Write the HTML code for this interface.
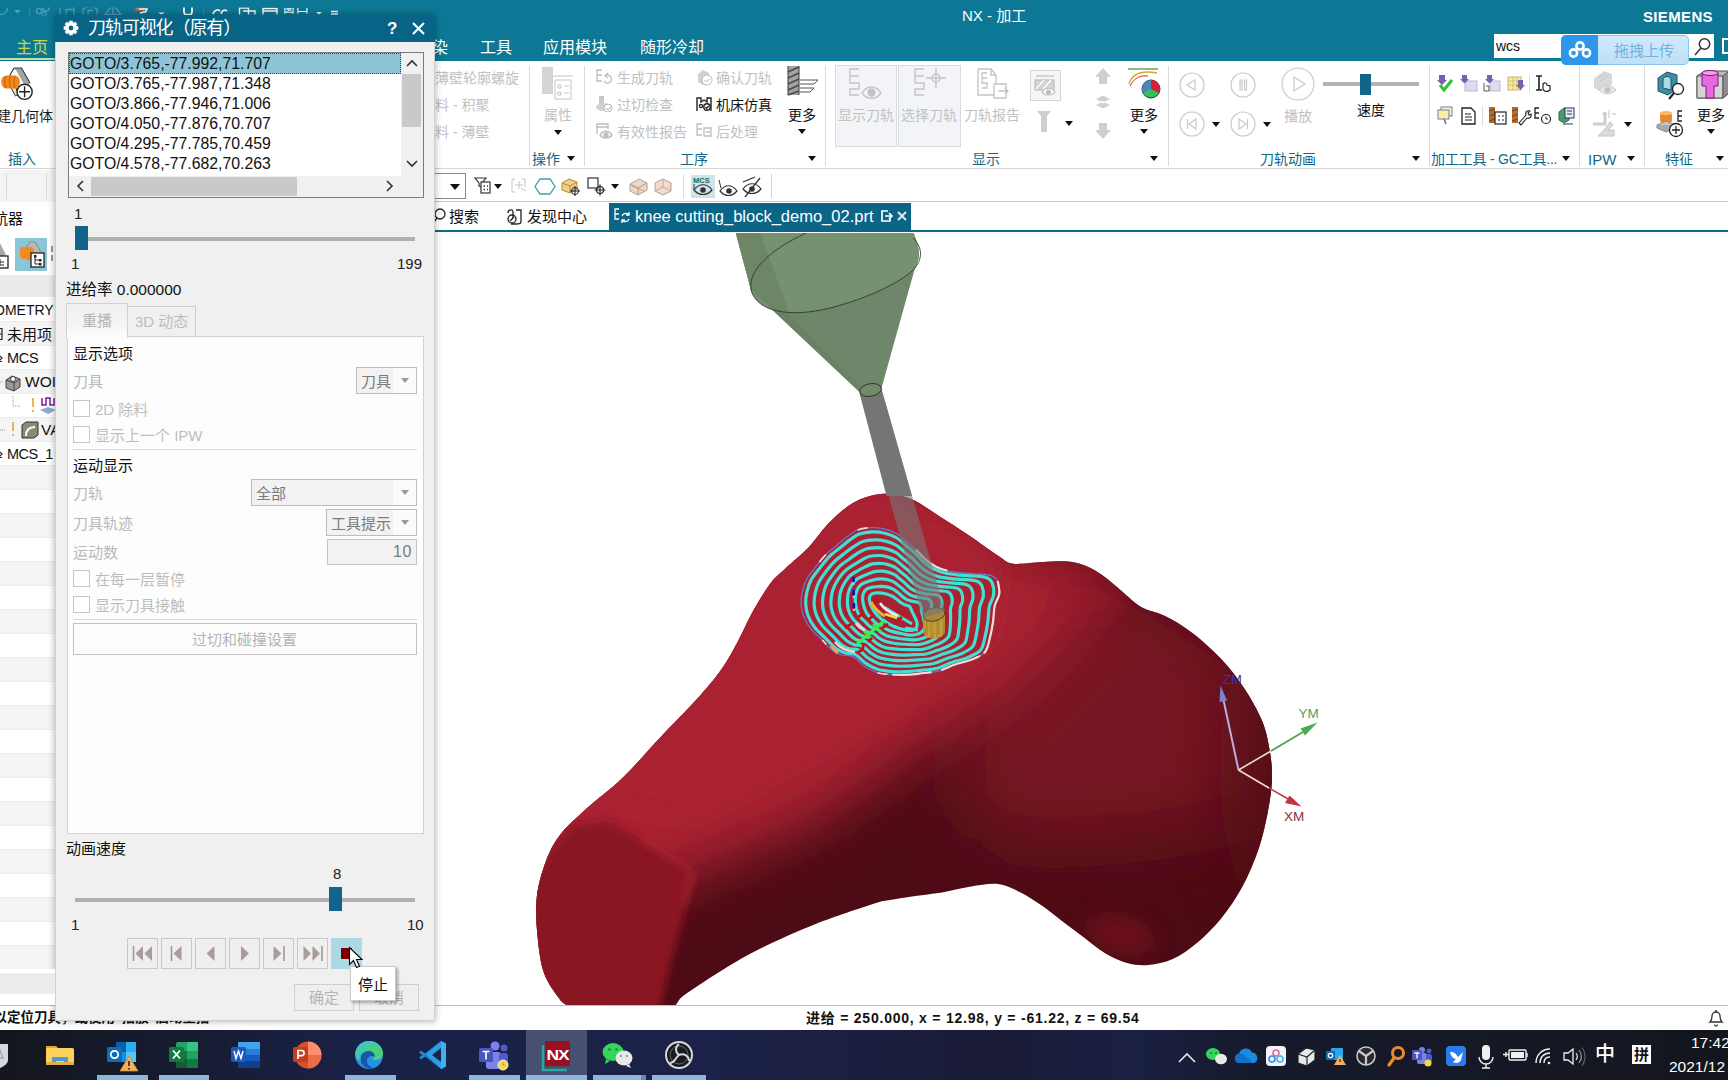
<!DOCTYPE html>
<html lang="zh-CN"><head><meta charset="utf-8"><title>NX - 加工</title>
<style>
*{box-sizing:border-box;margin:0;padding:0}
html,body{width:1728px;height:1080px;overflow:hidden;background:#fff}
body{position:relative;font-family:"Liberation Sans","Noto Sans CJK SC",sans-serif;font-size:14px;color:#1a1a1a}
.a{position:absolute;white-space:nowrap;line-height:1}
.teal{background:#0c7895}
.g{color:#c1c1c1}
.t{color:#0f6886}
.sep{position:absolute;width:1px;background:#d9d9d9}
.arr{position:absolute;width:0;height:0;border-left:4px solid transparent;border-right:4px solid transparent;border-top:5px solid #111}
.cb{position:absolute;width:17px;height:17px;border:1px solid #c6c6c6;background:#fff}
.pb{position:absolute;top:938px;width:31px;height:31px;border:1px solid #c9c9c9;background:#efefef}
.tk{position:absolute;top:1075px;height:5px;background:#8fb6d6}
</style></head><body>
<!-- ===== main window chrome ===== -->
<div id="titlebar" class="a teal" style="left:0;top:0;width:1728px;height:61px"></div>
<div id="ribbon" class="a" style="left:0;top:61px;width:1728px;height:108px;background:#fff;border-bottom:1px solid #d6d6d6"></div>
<div id="toolbar" class="a" style="left:0;top:170px;width:1728px;height:32px;background:#fff;border-bottom:1px solid #c8c8c8"></div>
<div id="tabrow" class="a" style="left:434px;top:203px;width:1294px;height:29px;background:#fff;border-bottom:2px solid #0f6886"></div>
<div id="viewport" class="a" style="left:434px;top:232px;width:1294px;height:773px;background:#fff"></div>
<div id="statusbar" class="a" style="left:0;top:1005px;width:1728px;height:26px;background:#fff;border-top:1px solid #bdbdbd"></div>
<div id="taskbar" class="a" style="left:0;top:1030px;width:1728px;height:50px;background:linear-gradient(90deg,#14161e 0,#161a2c 140px,#1a2146 345px,#1b2148 700px,#1a1c37 1000px,#1a2044 1130px,#171a2c 1250px,#14161e 1728px)"></div>

<!-- title bar content -->
<div class="a" style="left:962px;top:8px;font-size:15px;color:#fff">NX - 加工</div>
<div class="a" style="left:1643px;top:9px;font-size:15px;font-weight:bold;color:#fff;letter-spacing:.35px">SIEMENS</div>
<div class="a" style="left:16px;top:39.500px;font-size:16px;color:#c9d648">主页</div>
<div class="a" style="left:0;top:57.500px;width:55px;height:2.500px;background:#bfe2a0"></div>
<div class="a" style="left:432px;top:39.500px;font-size:16px;color:#fff">染</div>
<div class="a" style="left:480px;top:39.500px;font-size:16px;color:#fff">工具</div>
<div class="a" style="left:543px;top:39.500px;font-size:16px;color:#fff">应用模块</div>
<div class="a" style="left:640px;top:39.500px;font-size:16px;color:#fff">随形冷却</div>
<!-- quick access toolbar faint icons -->
<svg class="a" style="left:0;top:0" width="440" height="16" fill="none" stroke="#4f9db6" stroke-width="1.300">
<defs><clipPath id="qc"><rect x="0" y="7.500" width="440" height="8"/></clipPath></defs>
<g clip-path="url(#qc)">
<circle cx="1" cy="8" r="6.500"/><path d="M14 10l3.500 3.500L21 10z" fill="#4f9db6" stroke="none"/><path d="M29.500 0v16" stroke="#2c88a3"/>
<circle cx="46" cy="8" r="3"/><circle cx="39" cy="11" r="2.600"/><circle cx="44" cy="14" r="2"/><path d="M41 10l3-1"/>
<path d="M60 14.500V4h10l4 4v6.500M66 14.500v-5h8"/><path d="M83 14.500V9l7-3 7 3v5.500M88 14.500v-4h5"/><path d="M105 14.500l8-10 8 10zM113 7v7.500"/>
<path d="M134 10.500l3-3h10l-3 3z" fill="#e0643a" stroke="none"/><path d="M139 9h8l-1 2.500-6 1.500" stroke="#f4f4f4" stroke-width="1.500"/>
<path d="M158 12.500h7l-3.500 2z" fill="#e6f0f3" stroke="none"/>
<rect x="184" y="5" width="8" height="9.500" rx="2.500" stroke="#fff" stroke-width="1.700"/>
<path d="M203.500 0v16" stroke="#2c88a3"/>
<path d="M213 14c1-4 5-5 7-3M221 14c1-4 4-4.500 6-3" stroke="#e8f2f5" stroke-width="1.800"/>
<path d="M239.500 14.500V8h9v6.500M243 11h12v3.500" stroke="#f0f6f8" stroke-width="1.400"/><path d="M263 14.500V8.500h14v6M263 11h14" stroke="#f0f6f8" stroke-width="1.400"/>
<path d="M316 12h6l-3 2.500z" fill="#e6f0f3" stroke="none"/><path d="M331 11.500h7M331 14h7" stroke="#e6f0f3" stroke-width="1.300"/>
</g></svg>
<div class="a" style="left:282px;top:7.500px;height:7.500px;width:30px;overflow:hidden"><div style="position:absolute;left:0;top:-6.500px;font-size:13.500px;line-height:1;color:#f0f6f8">窗口</div></div>
<!-- search box -->
<div class="a" style="left:1494px;top:34px;width:220px;height:24px;background:#fff"></div>
<div class="a" style="left:1496px;top:39px;font-size:14px;color:#111">wcs</div>
<div class="a" style="left:1561px;top:35px;width:128px;height:30px;border-radius:5px;background:linear-gradient(#cfe9fb,#bfe0f7);border:1px solid #8cc3ee"></div>
<div class="a" style="left:1561px;top:35px;width:37px;height:30px;border-radius:5px 0 0 5px;background:#2f97ea"></div>
<svg class="a" style="left:1566px;top:39px" width="28" height="22" fill="none" stroke="#fff" stroke-width="2.6"><circle cx="14" cy="7" r="3.6"/><circle cx="7.5" cy="14" r="3.6"/><circle cx="20.500" cy="14" r="3.6"/></svg>
<div class="a" style="left:1614px;top:43px;font-size:15px;color:#6db4e6">拖拽上传</div>
<svg class="a" style="left:1692px;top:36px" width="22" height="22" fill="none" stroke="#333" stroke-width="1.5"><circle cx="12.5" cy="8" r="5.2"/><path d="M9 12l-6 7"/></svg>
<div class="a" style="left:1722px;top:38px;width:8px;height:16px;border:2px solid #fff;border-right:0"></div>
<!-- ribbon content -->
<svg class="a" style="left:0;top:64px" width="40" height="40"><path d="M14 4h7.500l8.500 15-3 5-3.500-4.500L16.500 7z" fill="#9ea4a8"/><path d="M14 4L9.500 12M14 4h7.500l8.500 15" fill="none" stroke="#3c3c3c" stroke-width="1.200"/><path d="M11 24l4.500 8 3-2-3-7z" fill="#e8d8d0" stroke="#3c3c3c" stroke-width="1"/><rect x="1.300" y="11.500" width="18.500" height="13" rx="5.500" fill="#f0861c"/><path d="M6 12c-1.500 4-1.500 8 0 12M10.500 12c-1.500 4-1.500 8 0 12M15 12c-1.500 4-1.500 8 0 12" stroke="#d06a08" stroke-width="1.300" fill="none"/><circle cx="24.600" cy="27.800" r="7.600" fill="#fff" stroke="#222" stroke-width="1.400"/><path d="M24.600 22.300v11M19.100 27.800h11" stroke="#222" stroke-width="1.400"/></svg>
<div class="a " style="left:-3px;top:109px;font-size:14px;">建几何体</div>
<div class="a t" style="left:8px;top:152px;font-size:14px;">插入</div>
<div class="a g" style="left:435px;top:71px;font-size:14px;">薄壁轮廓螺旋</div>
<div class="a g" style="left:435px;top:98px;font-size:14px;">料 - 积聚</div>
<div class="a g" style="left:435px;top:125px;font-size:14px;">料 - 薄壁</div>
<div class="sep" style="left:529px;top:66px;height:100px"></div>
<svg class="a" style="left:540px;top:66px" width="36" height="36" fill="none" stroke="#c4c4c4"><rect x="2" y="1" width="11" height="27" fill="#d4d4d4" stroke="none"/><path d="M13 10h20M15 14h16v19h-16z"/><path d="M18 19h3v3h-3zM18 26h3v3h-3zM24 20h5M24 27h5"/></svg>
<div class="a g" style="left:544px;top:108px;font-size:14px;">属性</div>
<div class="arr" style="left:554px;top:130px;border-top-color:#111"></div>
<div class="a t" style="left:532px;top:152px;font-size:14px;">操作</div>
<div class="arr" style="left:567px;top:156px;border-top-color:#111"></div>
<div class="sep" style="left:584px;top:66px;height:100px"></div>
<svg class="a" style="left:595px;top:68px" width="18" height="18" fill="none" stroke="#bdbdbd" stroke-width="1.3"><path d="M7 2H2v5h5M2 7v6h5"/><path d="M10 8a4 4 0 1 1-1 5M13 5l-3 3 3 2"/></svg>
<div class="a g" style="left:617px;top:71px;font-size:14px;">生成刀轨</div>
<svg class="a" style="left:595px;top:95px" width="18" height="18"><rect x="4" y="1" width="5" height="9" fill="#c9c9c9"/><ellipse cx="8" cy="12" rx="7" ry="4" fill="#d2d2d2"/><circle cx="13" cy="13" r="4" fill="#fff" stroke="#bbb"/><path d="M11 13l2 2 3-3" stroke="#aaa" fill="none"/></svg>
<div class="a g" style="left:617px;top:98px;font-size:14px;">过切检查</div>
<svg class="a" style="left:595px;top:122px" width="18" height="18" fill="none" stroke="#bdbdbd" stroke-width="1.3"><path d="M2 12V2h11v5M2 5h11"/><path d="M5 13c3-5 9-5 12 0-3 4-9 4-12 0z"/><circle cx="11" cy="13" r="2" fill="#bdbdbd"/></svg>
<div class="a g" style="left:617px;top:125px;font-size:14px;">有效性报告</div>
<svg class="a" style="left:695px;top:68px" width="18" height="18"><path d="M3 6l5-4 6 3v8l-6 4-5-3z" fill="#d0d0d0"/><circle cx="12" cy="12" r="5" fill="#fff" stroke="#bbb"/><path d="M9.500 12l2 2 3-3" stroke="#aaa" fill="none"/></svg>
<div class="a g" style="left:716px;top:71px;font-size:14px;">确认刀轨</div>
<svg class="a" style="left:695px;top:95px" width="18" height="18" fill="none" stroke="#222" stroke-width="1.4"><path d="M2 16V3h4v4l3-2 3 2V3h4v13"/><circle cx="6" cy="11" r="1.6"/><circle cx="12" cy="12" r="3.2" fill="#fff"/><path d="M10.500 12l1.200 1.300 2-2.300"/></svg>
<div class="a " style="left:716px;top:98px;font-size:14px;color:#111">机床仿真</div>
<svg class="a" style="left:695px;top:122px" width="18" height="18" fill="none" stroke="#bdbdbd" stroke-width="1.3"><path d="M7 2H2v5h5M2 7v6h5"/><path d="M9 6h7v8H9zM11 10h4"/></svg>
<div class="a g" style="left:716px;top:125px;font-size:14px;">后处理</div>
<svg class="a" style="left:786px;top:66px" width="36" height="34"><rect x="2" y="0" width="11" height="29" fill="#a2a2a2"/><path d="M2 6l11-5M2 12l11-5M2 18l11-5M2 24l11-5M2 29l11-4" stroke="#4a4a4a" stroke-width="1.6"/><path d="M2 0v29M13 0v29" stroke="#3a3a3a" stroke-width="1"/><path d="M14 14h18l-4 4H14M14 22h14l-4 4H14" fill="#fff" stroke="#555" stroke-width="1"/></svg>
<div class="a " style="left:788px;top:108px;font-size:14px;color:#111">更多</div>
<div class="arr" style="left:798px;top:129px;border-top-color:#111"></div>
<div class="a t" style="left:680px;top:152px;font-size:14px;">工序</div>
<div class="arr" style="left:808px;top:156px;border-top-color:#111"></div>
<div class="sep" style="left:825px;top:66px;height:100px"></div>
<div class="a" style="left:835px;top:65px;width:62px;height:82px;background:#f3f4f8;border:1px solid #d9dbe3"></div>
<div class="a" style="left:898px;top:65px;width:63px;height:82px;background:#f3f4f8;border:1px solid #d9dbe3"></div>
<svg class="a" style="left:848px;top:67px" width="40" height="34" fill="none" stroke="#c3c3c3" stroke-width="1.3"><path d="M11 2H2v7h9M2 9v7h9v6H2v6h9"/><path d="M14 26c5-8 14-8 19 0-5 7-14 7-19 0z"/><circle cx="23.500" cy="25.500" r="3.500" fill="#c3c3c3"/></svg>
<div class="a g" style="left:838px;top:108px;font-size:14px;">显示刀轨</div>
<svg class="a" style="left:911px;top:67px" width="40" height="34" fill="none" stroke="#c3c3c3" stroke-width="1.3"><path d="M13 2H4v7h9M4 9v7h9v6H4v6h9"/><circle cx="25" cy="11" r="4"/><path d="M25 1v20M15 11h20"/></svg>
<div class="a g" style="left:901px;top:108px;font-size:14px;">选择刀轨</div>
<svg class="a" style="left:974px;top:67px" width="40" height="36" fill="none" stroke="#c3c3c3" stroke-width="1.3"><path d="M4 2h13l5 6v20H4z"/><path d="M17 2v6h5M13 6H8v5h5M8 11v5h5v5H8"/><path d="M20 17h12v14H20zM24 24h10M31 21l3 3-3 3" fill="#fff"/></svg>
<div class="a g" style="left:964px;top:108px;font-size:14px;">刀轨报告</div>
<div class="a" style="left:1030px;top:70px;width:31px;height:31px;border:1px solid #d4d4d4;background:#f6f6f6"></div>
<svg class="a" style="left:1033px;top:72px" width="26" height="26" fill="none" stroke="#bdbdbd" stroke-width="1.2"><path d="M3 4h18"/><rect x="2" y="8" width="19" height="10" fill="#d4d4d4"/><path d="M3 17l8-9M10 17l8-9" stroke="#fff"/><path d="M9 20c3-5 10-5 13 0-3 4-10 4-13 0z" fill="#fff"/><circle cx="15.500" cy="20" r="2" fill="#bdbdbd"/></svg>
<svg class="a" style="left:1035px;top:109px" width="20" height="26"><path d="M2 2h14l-4 5v16H6V7z" fill="#cfcfcf"/></svg>
<div class="arr" style="left:1065px;top:121px;border-top-color:#111"></div>
<svg class="a" style="left:1094px;top:67px" width="20" height="74" fill="#cfcfcf"><path d="M9 1l8 9h-4v7H5v-7H1z"/><path d="M9 28l8 4-8 4-8-4zM9 34l8 4-8 4-8-4z" stroke="#fff"/><path d="M9 72l8-9h-4v-7H5v7H1z"/></svg>
<svg class="a" style="left:1126px;top:66px" width="36" height="36" fill="none"><path d="M2 3h30" stroke="#3a8a3a" stroke-width="1.2"/><path d="M3 18c3-10 12-14 28-11" stroke="#e0a030" stroke-width="1.3"/><path d="M4 20c4-8 10-11 18-10" stroke="#c03030" stroke-width="1"/><circle cx="25" cy="23" r="9" fill="#2ec45a" stroke="#333"/><path d="M25 23V14a9 9 0 0 1 8 13z" fill="#d8203a"/><path d="M25 23V14a9 9 0 0 0-8 13z" fill="#4a86b8"/></svg>
<div class="a " style="left:1130px;top:108px;font-size:14px;color:#111">更多</div>
<div class="arr" style="left:1140px;top:129px;border-top-color:#111"></div>
<div class="a t" style="left:972px;top:152px;font-size:14px;">显示</div>
<div class="arr" style="left:1150px;top:156px;border-top-color:#111"></div>
<div class="sep" style="left:1168px;top:66px;height:100px"></div>
<svg class="a" style="left:1179px;top:72px" width="26" height="26" fill="none" stroke="#c9c9c9" stroke-width="1.2"><circle cx="13" cy="13" r="12"/><path d="M16 8l-8 5 8 5z"/></svg>
<svg class="a" style="left:1230px;top:72px" width="26" height="26" fill="none" stroke="#c9c9c9" stroke-width="1.2"><circle cx="13" cy="13" r="12"/><path d="M10 8h2v10h-2zM14.500 8h2v10h-2z"/></svg>
<svg class="a" style="left:1179px;top:111px" width="26" height="26" fill="none" stroke="#c9c9c9" stroke-width="1.2"><circle cx="13" cy="13" r="12"/><path d="M17 8l-7 5 7 5zM8.500 8v10"/></svg>
<svg class="a" style="left:1230px;top:111px" width="26" height="26" fill="none" stroke="#c9c9c9" stroke-width="1.2"><circle cx="13" cy="13" r="12"/><path d="M9 8l7 5-7 5zM17.500 8v10"/></svg>
<div class="arr" style="left:1212px;top:122px;border-top-color:#111"></div>
<div class="arr" style="left:1263px;top:122px;border-top-color:#111"></div>
<svg class="a" style="left:1281px;top:67px" width="34" height="34" fill="none" stroke="#c9c9c9" stroke-width="1.2"><circle cx="17" cy="17" r="16"/><path d="M13 10l11 7-11 7z"/></svg>
<div class="a g" style="left:1284px;top:109px;font-size:14px;">播放</div>
<div class="a" style="left:1323px;top:82px;width:96px;height:4px;background:#b3b3b3"></div>
<div class="a" style="left:1360px;top:74px;width:11px;height:21px;background:#12648a"></div>
<div class="a " style="left:1357px;top:103px;font-size:14px;color:#111">速度</div>
<div class="a t" style="left:1260px;top:152px;font-size:14px;">刀轨动画</div>
<div class="arr" style="left:1412px;top:156px;border-top-color:#111"></div>
<div class="sep" style="left:1429px;top:66px;height:100px"></div>
<div class="a t" style="left:1431px;top:152px;font-size:14px;letter-spacing:-0.2px">加工工具 - GC工具...</div>
<div class="arr" style="left:1562px;top:156px;border-top-color:#111"></div>
<div class="sep" style="left:1579px;top:66px;height:100px"></div>
<div class="a t" style="left:1588px;top:151.5px;font-size:15px;">IPW</div>
<div class="arr" style="left:1627px;top:156px;border-top-color:#111"></div>
<div class="sep" style="left:1644px;top:66px;height:100px"></div>
<div class="a t" style="left:1665px;top:152px;font-size:14px;">特征</div>
<div class="arr" style="left:1716px;top:156px;border-top-color:#111"></div>
<div class="a " style="left:1697px;top:108px;font-size:14px;color:#111">更多</div>
<div class="arr" style="left:1707px;top:129px;border-top-color:#111"></div>
<div class="arr" style="left:1624px;top:122px"></div>
<!-- ribbon right icons -->
<svg class="a" style="left:1435px;top:72px" width="145" height="56" fill="none">
<!-- row1 -->
<path d="M4 3h6v5h2l-5 5-5-5h2z" fill="#7a5fb0"/><path d="M5 13l4 5 8-10" stroke="#35c035" stroke-width="3"/>
<rect x="30" y="9" width="12" height="10" fill="#dcdcf0" stroke="#b8b8d8"/><path d="M27 3h5v4h2l-4.500 4.500L25 7h2z" fill="#7a5fb0"/>
<rect x="55" y="9" width="10" height="10" fill="#dcdcf0" stroke="#b8b8d8"/><path d="M52 3h5v4h2l-4.500 4.500L50 7h2z" fill="#7a5fb0"/><path d="M49 11v8h5v-5h-3" stroke="#555"/>
<rect x="73" y="5" width="13" height="13" fill="#f6e9a8" stroke="#c8b868"/><path d="M73 9h13M73 13h13M78 5v13M82 5v13" stroke="#c8b868" stroke-width=".7"/><path d="M83 8h5v5h2l-4.500 5-4.500-5h2z" fill="#7a5fb0"/>
<path d="M94.500 3v18" stroke="#ddd"/>
<path d="M101 4h6M104 4v14M101 18h6" stroke="#222" stroke-width="1.600"/><path d="M108 12c2-2 4-1 4 1l3 1v4c-2 2-6 2-7-1z" fill="#fff" stroke="#222" stroke-width="1.200"/>
<!-- row2 -->
<rect x="6" y="35" width="11" height="9" fill="#f3f3d8" stroke="#7a7aa0"/><rect x="3" y="38" width="11" height="9" fill="#f6f0a0" stroke="#7a7aa0"/><path d="M9 47l2 5" stroke="#7a5fb0" stroke-width="1.500"/>
<path d="M27 36h9l4 4v12H27z" stroke="#222" stroke-width="1.300"/><path d="M30 42h6M30 45h7M30 48h7" stroke="#222" stroke-width="1"/>
<path d="M47.500 34v20" stroke="#ddd"/>
<rect x="54" y="35" width="6" height="16" fill="#b86a2a"/><path d="M54 39l6-2M54 44l6-2M54 49l6-2" stroke="#7a4010"/><rect x="60" y="40" width="11" height="12" fill="#fff" stroke="#222" stroke-width="1.200"/><path d="M63 44h2M63 48h2M67 44h2M67 48h2" stroke="#222"/>
<rect x="77" y="35" width="6" height="16" fill="#b86a2a"/><path d="M77 39l6-2M77 44l6-2M77 49l6-2" stroke="#7a4010"/><path d="M84 51l7-8c-1-3 1-5 4-4l-2 2 1 2 2-1c1 3-2 5-4 4l-6 7z" fill="#fff" stroke="#222" stroke-width="1.100"/>
<path d="M104 36h-4v5h4M100 41v5h4" stroke="#222" stroke-width="1.300"/><circle cx="111" cy="47" r="4.500" stroke="#222" stroke-width="1.200"/><path d="M111 44.500V47h2" stroke="#222"/>
<path d="M124 40l5-4 5 2v10l-5 3-5-3z" fill="#4a9a6a" stroke="#2a6a4a"/><rect x="130" y="36" width="9" height="10" fill="#e8eef8" stroke="#335"/><path d="M132 39h5M132 42h5" stroke="#335"/><path d="M128 52h10" stroke="#335"/>
</svg>
<svg class="a" style="left:1590px;top:68px" width="30" height="72" fill="none">
<path d="M4 10l10-7 8 3v10l-10 8-8-4z" fill="#d9d9d9"/><path d="M8 10l8-5M10 13l8-5" stroke="#c4c4c4"/><path d="M9 22c4-6 12-6 17 0-5 5-13 5-17 0z" fill="#e6e6e6" stroke="#c9c9c9"/><circle cx="17.500" cy="22" r="3" fill="#c2c2c2"/>
<path d="M3 56h12V44" stroke="#cfcfcf" stroke-width="3"/><path d="M12 46h4M22 46h4M19 42v8" stroke="#c4c4c4"/><path d="M8 68l8-8 4-6 3 3-5 5h6v6z" fill="#dcdcdc" stroke="#c4c4c4"/>
</svg>
<svg class="a" style="left:1655px;top:68px" width="74" height="72" fill="none">
<path d="M3 10l9-6 10 3v14l-9 6-10-4z" fill="#3c8ea0" stroke="#1e5566"/><path d="M8 12c0-4 8-5 8 0v10l-8-2z" fill="#a8dce6" stroke="#1e5566"/><circle cx="23" cy="21" r="5.500" fill="#fff" stroke="#222" stroke-width="1.300"/><path d="M19 25l-5 6" stroke="#222" stroke-width="2"/>
<path d="M42 8l8-5h20l4 0v22l-6 5H42z" fill="#b9b9b9" stroke="#555"/><path d="M42 8h26v22H42z" fill="#d4d4d4" stroke="#555"/><path d="M68 8l6-5v22l-6 5z" fill="#8e8e8e" stroke="#555"/><path d="M47 5h16v13h-4v12h-8V18h-4z" fill="#e868e0" stroke="#7a1a7a"/><ellipse cx="55" cy="5" rx="8" ry="2.500" fill="#f0a0ea" stroke="#7a1a7a"/>
<rect x="5" y="45" width="12" height="10" rx="3" fill="#f08a28"/><ellipse cx="11" cy="45" rx="6" ry="2" fill="#f8b868"/><path d="M2 57l9-4 9 4-9 4z" fill="#c8c8c8" stroke="#888"/><path d="M2 57v3l9 4 9-4v-3" fill="#aaa" stroke="#888"/><path d="M27 43h-4v5h4M23 48v5h4" stroke="#222" stroke-width="1.300"/><circle cx="21" cy="62" r="6.500" fill="#fff" stroke="#222" stroke-width="1.300"/><path d="M21 58v8M17 62h8" stroke="#222" stroke-width="1.300"/>
</svg>
<!-- toolbar row -->
<div class="a" style="left:434px;top:173px;width:32px;height:26px;border:1px solid #8a8a8a;border-left:0;background:#fff"></div>
<div class="arr" style="left:450px;top:184px;border-left-width:5px;border-right-width:5px;border-top-width:6px"></div>
<svg class="a" style="left:472px;top:172px" width="310" height="28" fill="none">
<path d="M3 6h11l-4 5v4l-3-1v-3z" stroke="#333" stroke-width="1.200"/><rect x="9" y="10" width="9" height="11" fill="#fff" stroke="#333" stroke-width="1.200"/><path d="M11.500 14h1.500M11.500 17.500h1.500M15 14h1M15 17.500h1" stroke="#333" stroke-width="1.300"/>
<path d="M22 12h8l-4 5z" fill="#111"/>
<path d="M43 7h-3v13h3M50 7h3v8" stroke="#c4c4c4"/><path d="M43 13h8M47 9v8M49 16l5 3" stroke="#c4c4c4"/>
<path d="M68 7h10l5 7.500-5 7.500H68l-5-7.500z" stroke="#3aa0a8" stroke-width="1.300"/>
<path d="M90 11l7-4 8 3v7l-7 4-8-3z" fill="#f2cf88" stroke="#b88a30"/><path d="M90 11l8 3 7-4M98 14v7" stroke="#b88a30"/><circle cx="103" cy="19" r="3.500" stroke="#222"/><path d="M103 14v10M98 19h10" stroke="#222"/>
<rect x="116" y="6" width="10" height="10" stroke="#333" stroke-width="1.200"/><circle cx="128" cy="18" r="3.500" stroke="#222" stroke-width="1.200"/><path d="M128 12.500v11M122.500 18h11" stroke="#222" stroke-width="1.200"/>
<path d="M139 12h8l-4 5z" fill="#111"/>
<path d="M158 12l9-5 8 4v7l-9 5-8-4z" fill="#ecd8c8" stroke="#b0a090"/><path d="M158 12l8 4 9-5M166 16v7" stroke="#b0a090"/><path d="M160 14l12 5" stroke="#c8a078"/>
<path d="M183 11l8-4 8 4v8l-8 4-8-4z" fill="#f0dcd0" stroke="#b0a090"/><path d="M191 7v8l-8 4M191 15l8 4" stroke="#c8a890"/>
<path d="M211.500 2v24" stroke="#ddd"/>
<rect x="219" y="3" width="24" height="23" fill="#cfe4e6"/><text x="221" y="11" font-family="Liberation Sans,sans-serif" font-size="7.500" font-weight="bold" fill="#1a6a50">MCS</text><path d="M222 18c5-7 13-7 18 0-5 6-13 6-18 0z" stroke="#333" stroke-width="1.200"/><circle cx="231" cy="18" r="2.800" fill="#333"/><path d="M222 12v6" stroke="#333"/>
<path d="M248 19c5-7 12-7 17 0-5 6-12 6-17 0z" stroke="#333" stroke-width="1.200"/><circle cx="257" cy="19" r="2.800" fill="#333"/><path d="M247 8l2 8" stroke="#333"/>
<path d="M271 17c5-7 13-7 18 0-5 6-13 6-18 0z" stroke="#333" stroke-width="1.200"/><circle cx="280" cy="17" r="2.800" fill="#333"/><path d="M273 25l15-19M271 10l12-5" stroke="#333" stroke-width="1.300"/>
<path d="M299.500 2v24" stroke="#e8c8c8"/>
</svg>
<div class="a" style="left:0;top:170px;width:55px;height:32px;background:#f4f4f4"></div><div class="sep" style="left:6px;top:173px;height:26px"></div><div class="sep" style="left:46px;top:173px;height:26px"></div>
<!-- tab row -->
<svg class="a" style="left:434px;top:206px" width="16" height="20" fill="none" stroke="#222" stroke-width="1.300"><circle cx="6" cy="8" r="5"/><path d="M3 12l-3 4"/></svg>
<div class="a" style="left:449px;top:209px;font-size:15px;color:#111">搜索</div>
<svg class="a" style="left:506px;top:206px" width="18" height="20" fill="none" stroke="#222" stroke-width="1.300"><path d="M2 7c0-4 5-4 5-1v6M10 4h5v12c0 2-2 2-5 2H5"/><circle cx="6" cy="13" r="4"/><path d="M4 15l4-4"/></svg>
<div class="a" style="left:527px;top:209px;font-size:15px;color:#111">发现中心</div>
<div class="a" style="left:609px;top:203px;width:302px;height:29px;background:#0a6587"></div>
<svg class="a" style="left:613px;top:207px" width="18" height="20" fill="none" stroke="#fff" stroke-width="1.300"><path d="M6 2H2v5h4M2 7v5h4"/><path d="M9 9a4 4 0 0 1 7-1M16 12a4 4 0 0 1-7 1M16 5v3h-3M9 16v-3h3"/></svg>
<div class="a" id="tabtxt" style="left:635px;top:208px;font-size:16.500px;color:#fff">knee cutting_block_demo_02.prt</div>
<svg class="a" style="left:880px;top:209px" width="30" height="14" fill="none" stroke="#fff" stroke-width="1.700"><path d="M8 2H2v10h8V8M5 7h6M9 4l3 3-3 3"/><path d="M18 3l8 8M26 3l-8 8" stroke="#dfeaf0" stroke-width="2"/></svg>
<!--VIEW-->
<svg id="view" class="a" style="left:434px;top:233px" width="1294" height="772" viewBox="434 233 1294 772">
<defs>
<clipPath id="bc"><path d="M881.0 494.0C890.5 493.2 900.3 494.8 910.0 498.5C919.7 502.2 929.2 509.8 939.0 516.0C948.8 522.2 959.1 528.8 969.0 535.5C978.9 542.2 991.2 551.3 998.5 556.0C1005.8 560.7 1005.6 562.7 1013.0 563.7C1020.4 564.7 1033.1 562.3 1043.0 562.0C1052.9 561.7 1063.8 560.5 1072.6 562.0C1081.4 563.5 1088.6 566.8 1096.0 571.0C1103.4 575.2 1109.5 581.0 1117.0 587.0C1124.5 593.0 1132.9 602.0 1140.7 606.7C1148.5 611.5 1155.6 611.3 1164.0 615.5C1172.4 619.7 1181.5 624.8 1191.0 632.0C1200.5 639.2 1211.9 649.2 1220.7 658.5C1229.5 667.8 1237.1 677.6 1244.0 688.0C1250.9 698.4 1257.7 710.4 1262.0 720.7C1266.3 731.0 1267.9 740.3 1269.6 750.0C1271.3 759.7 1272.3 768.8 1272.0 779.0C1271.7 789.2 1270.2 799.3 1268.0 811.0C1265.8 822.7 1262.8 836.4 1258.6 849.0C1254.3 861.6 1248.8 874.9 1242.5 886.5C1236.2 898.1 1228.6 909.3 1221.0 918.7C1213.4 928.1 1205.0 936.2 1196.9 942.9C1188.9 949.6 1180.8 955.3 1172.7 959.0C1164.6 962.7 1156.1 964.3 1148.5 965.0C1140.9 965.7 1134.2 964.9 1127.0 963.0C1119.8 961.1 1112.8 957.9 1105.6 953.6C1098.4 949.4 1091.2 942.9 1084.0 937.5C1076.8 932.1 1069.8 926.8 1062.6 921.4C1055.4 916.0 1048.2 909.9 1041.0 905.0C1033.8 900.1 1026.8 895.4 1019.6 891.9C1012.4 888.4 1006.1 884.9 998.0 884.0C989.9 883.1 979.9 885.2 971.0 886.5C962.1 887.8 954.2 890.3 944.4 892.0C934.6 893.7 921.1 895.2 912.0 896.5C902.9 897.8 896.5 898.8 890.0 900.0C883.5 901.2 885.4 900.0 873.0 904.0C860.6 908.0 834.9 916.4 815.7 924.0C796.5 931.6 774.3 941.6 758.0 949.7C741.7 957.8 730.4 965.1 718.0 972.7C705.6 980.4 691.4 989.9 683.7 995.6C676.0 1001.3 679.3 1004.3 672.0 1007.0C664.7 1009.7 652.0 1011.2 640.0 1012.0C628.0 1012.8 611.8 1013.0 600.0 1012.0C588.2 1011.0 576.2 1008.7 569.0 1006.0C561.8 1003.3 561.3 1001.6 557.0 995.6C552.7 989.6 546.3 980.9 543.0 970.0C539.7 959.1 538.0 942.5 537.0 930.0C536.0 917.5 535.5 906.5 537.0 895.0C538.5 883.5 542.2 871.0 546.0 861.0C549.8 851.0 553.3 843.7 560.0 835.0C566.7 826.3 575.5 818.6 586.0 809.0C596.5 799.4 610.5 789.5 623.0 777.5C635.5 765.5 648.4 750.1 660.7 737.0C673.0 723.9 687.0 710.2 697.0 699.0C707.0 687.8 714.2 679.5 721.0 670.0C727.8 660.5 732.5 651.3 737.6 642.0C742.7 632.7 746.1 623.7 751.5 614.0C756.9 604.3 764.2 591.7 770.0 584.0C775.8 576.3 779.5 574.2 786.0 568.0C792.5 561.8 802.0 554.3 809.0 547.0C816.0 539.7 820.7 531.3 828.0 524.0C835.3 516.7 844.2 508.0 853.0 503.0C861.8 498.0 871.5 494.8 881.0 494.0Z"/></clipPath>
<filter id="b30" filterUnits="userSpaceOnUse" x="400" y="300" width="1000" height="800"><feGaussianBlur stdDeviation="28"/></filter>
<filter id="b40" filterUnits="userSpaceOnUse" x="400" y="300" width="1000" height="800"><feGaussianBlur stdDeviation="38"/></filter>
<filter id="b12" filterUnits="userSpaceOnUse" x="400" y="300" width="1000" height="800"><feGaussianBlur stdDeviation="12"/></filter>
<filter id="b4" filterUnits="userSpaceOnUse" x="400" y="300" width="1000" height="800"><feGaussianBlur stdDeviation="4"/></filter>
<linearGradient id="sh" x1="0" y1="0" x2="1" y2="0"><stop offset="0" stop-color="#6e6e6e"/><stop offset=".5" stop-color="#8a8a8a"/><stop offset="1" stop-color="#707070"/></linearGradient>
</defs>
<g clip-path="url(#bc)">
<rect x="500" y="480" width="800" height="540" fill="#4d0b15"/>
<path d="M1000.0 540.0L1120.0 570.0L1290.0 680.0L1290.0 800.0L1200.0 830.0L1110.0 840.0L1030.0 845.0L985.0 835.0L955.0 790.0L965.0 700.0Z" fill="#771520" filter="url(#b40)"/>
<ellipse cx="1275" cy="770" rx="55" ry="150" fill="#560c16" filter="url(#b30)" opacity=".75"/>
<path d="M881.0 470.0L960.0 500.0L1020.0 556.0L1090.0 556.0L1104.0 590.0L1068.0 632.0L1011.0 691.0L912.0 755.0L814.0 824.0L692.0 876.0L640.0 900.0L560.0 1000.0L500.0 1000.0L500.0 800.0L700.0 620.0L800.0 480.0Z" fill="#aa2233" filter="url(#b30)"/>
<path d="M881.0 485.0L950.0 515.0L1000.0 560.0L990.0 640.0L900.0 705.0L780.0 770.0L690.0 820.0L610.0 800.0L540.0 850.0L520.0 800.0L700.0 650.0L800.0 500.0Z" fill="#aa2233" filter="url(#b12)"/>
<path d="M609.0 821.0L640.0 838.0L695.0 872.0L684.0 915.0L672.0 958.0L660.0 1010.0L560.0 1010.0L530.0 960.0L530.0 890.0L546.0 855.0L570.0 826.0Z" fill="#8a1624" filter="url(#b4)"/>
<path d="M640 838 C660 850 675 858 693 872 L684 905" stroke="#c8384a" stroke-width="3" fill="none" filter="url(#b4)" opacity=".7"/>
<ellipse cx="1085" cy="600" rx="40" ry="22" fill="#98192b" filter="url(#b12)" opacity=".45"/>
<ellipse cx="1120" cy="935" rx="35" ry="14" fill="#7c1422" filter="url(#b12)" opacity=".9" transform="rotate(15 1120 935)"/>
</g>
<g fill="none" stroke-linejoin="round">
<path d="M857.7 530.0C861.9 528.4 867.3 527.8 871.8 527.6C876.2 527.4 880.2 528.0 884.4 529.0C888.6 530.0 893.3 531.8 897.0 533.9C900.7 536.0 903.4 539.2 906.5 541.8C909.6 544.4 912.5 546.5 915.9 549.6C919.3 552.7 923.5 557.7 926.9 560.6C930.3 563.5 933.0 565.2 936.4 566.9C939.8 568.6 943.0 569.9 947.4 570.9C951.8 571.9 957.8 572.5 963.0 573.0C968.2 573.5 974.2 573.6 978.9 574.0C983.6 574.4 988.3 574.4 991.4 575.6C994.5 576.8 996.4 578.0 997.7 581.0C999.0 584.0 999.8 589.5 999.3 593.7C998.8 597.9 995.6 601.6 994.6 606.3C993.6 611.0 993.8 616.8 993.0 622.0C992.2 627.2 991.2 632.8 989.9 637.8C988.6 642.8 988.1 648.3 985.0 652.0C981.9 655.7 976.0 657.7 971.0 659.8C966.0 661.9 960.2 662.7 955.0 664.5C949.8 666.3 944.7 669.4 939.5 670.8C934.3 672.2 929.0 672.4 923.8 673.0C918.5 673.6 913.2 674.4 908.0 674.7C902.8 675.0 897.5 675.1 892.3 674.7C887.1 674.3 881.3 673.9 876.6 672.4C871.9 670.9 867.9 668.6 864.0 666.0C860.1 663.4 856.7 658.4 853.0 656.6C849.3 654.8 845.4 656.0 842.0 655.0C838.6 654.0 835.9 652.9 832.5 650.3C829.1 647.7 825.2 643.0 821.5 639.3C817.8 635.6 813.5 632.2 810.5 628.3C807.5 624.4 805.0 619.9 803.4 615.7C801.8 611.5 801.1 607.2 801.0 603.0C800.9 598.8 801.6 594.7 802.6 590.5C803.6 586.3 804.9 582.2 807.3 578.0C809.7 573.8 813.6 569.4 816.8 565.4C819.9 561.4 822.8 557.7 826.2 554.3C829.6 550.9 833.8 547.8 837.2 544.9C840.6 542.0 843.3 539.5 846.7 537.0C850.1 534.5 853.5 531.6 857.7 530.0Z" stroke="#6a74c8" stroke-width="1.300"/>
<path d="M857.7 530.0C861.9 528.4 867.3 527.8 871.8 527.6C876.2 527.4 880.2 528.0 884.4 529.0C888.6 530.0 893.3 531.8 897.0 533.9C900.7 536.0 903.4 539.2 906.5 541.8C909.6 544.4 912.5 546.5 915.9 549.6C919.3 552.7 923.5 557.7 926.9 560.6C930.3 563.5 933.0 565.2 936.4 566.9C939.8 568.6 943.0 569.9 947.4 570.9C951.8 571.9 957.8 572.5 963.0 573.0C968.2 573.5 974.2 573.6 978.9 574.0C983.6 574.4 988.3 574.4 991.4 575.6C994.5 576.8 996.4 578.0 997.7 581.0C999.0 584.0 999.8 589.5 999.3 593.7C998.8 597.9 995.6 601.6 994.6 606.3C993.6 611.0 993.8 616.8 993.0 622.0C992.2 627.2 991.2 632.8 989.9 637.8C988.6 642.8 988.1 648.3 985.0 652.0C981.9 655.7 976.0 657.7 971.0 659.8C966.0 661.9 960.2 662.7 955.0 664.5C949.8 666.3 944.7 669.4 939.5 670.8C934.3 672.2 929.0 672.4 923.8 673.0C918.5 673.6 913.2 674.4 908.0 674.7C902.8 675.0 897.5 675.1 892.3 674.7C887.1 674.3 881.3 673.9 876.6 672.4C871.9 670.9 867.9 668.6 864.0 666.0C860.1 663.4 856.7 658.4 853.0 656.6C849.3 654.8 845.4 656.0 842.0 655.0C838.6 654.0 835.9 652.9 832.5 650.3C829.1 647.7 825.2 643.0 821.5 639.3C817.8 635.6 813.5 632.2 810.5 628.3C807.5 624.4 805.0 619.9 803.4 615.7C801.8 611.5 801.1 607.2 801.0 603.0C800.9 598.8 801.6 594.7 802.6 590.5C803.6 586.3 804.9 582.2 807.3 578.0C809.7 573.8 813.6 569.4 816.8 565.4C819.9 561.4 822.8 557.7 826.2 554.3C829.6 550.9 833.8 547.8 837.2 544.9C840.6 542.0 843.3 539.5 846.7 537.0C850.1 534.5 853.5 531.6 857.7 530.0Z" stroke="#f0dede" stroke-width="1.600" stroke-dasharray="10 60 6 90"/>
<path d="M997.7 581.0C998.0 583.1 999.8 589.5 999.3 593.7C998.8 597.9 995.6 601.6 994.6 606.3C993.6 611.0 993.8 616.8 993.0 622.0C992.2 627.2 991.2 632.8 989.9 637.8C988.6 642.8 988.1 648.3 985.0 652.0C981.9 655.7 976.0 657.7 971.0 659.8C966.0 661.9 960.2 662.7 955.0 664.5C949.8 666.3 944.7 669.4 939.5 670.8C934.3 672.2 929.0 672.4 923.8 673.0C918.5 673.6 913.2 674.4 908.0 674.7C902.8 675.0 894.9 674.7 892.3 674.7" stroke="#efdcdc" stroke-width="2.200" stroke-dasharray="75 6 40 10 60 400"/>
<path d="M915.9 549.6C917.7 551.4 923.5 557.7 926.9 560.6C930.3 563.5 933.0 565.2 936.4 566.9C939.8 568.6 945.6 570.2 947.4 570.9" stroke="#efdcdc" stroke-width="2.200"/>
<path d="M859.5 534.1C863.5 532.7 868.7 532.1 872.9 531.9C877.1 531.8 880.9 532.3 884.8 533.3C888.8 534.3 893.3 535.9 896.8 538.0C900.3 540.0 902.8 543.0 905.8 545.4C908.8 547.9 911.5 549.9 914.7 552.8C917.9 555.8 921.9 560.5 925.2 563.2C928.4 566.0 930.9 567.6 934.2 569.2C937.4 570.9 940.4 572.1 944.6 573.0C948.8 574.0 954.4 574.6 959.3 575.1C964.3 575.6 969.8 575.6 974.3 576.0C978.8 576.4 983.1 576.5 986.1 577.6C989.1 578.7 990.8 579.8 992.1 582.7C993.3 585.5 994.1 590.7 993.6 594.7C993.2 598.7 990.2 602.1 989.3 606.6C988.3 611.1 988.6 616.5 987.9 621.5C987.2 626.5 986.3 631.8 985.1 636.5C983.9 641.3 983.5 646.6 980.6 650.1C977.7 653.6 972.2 655.6 967.5 657.7C962.8 659.7 957.4 660.5 952.4 662.3C947.3 664.0 942.4 666.9 937.4 668.2C932.4 669.5 927.4 669.6 922.4 670.2C917.3 670.7 912.3 671.4 907.3 671.7C902.3 671.9 897.3 672.0 892.3 671.6C887.4 671.2 881.9 670.7 877.4 669.3C873.0 667.9 869.2 665.7 865.5 663.2C861.8 660.7 858.5 656.1 855.0 654.3C851.6 652.6 847.9 653.8 844.6 652.8C841.4 651.8 838.9 650.8 835.7 648.3C832.4 645.8 828.7 641.4 825.2 637.9C821.7 634.4 817.7 631.2 814.8 627.5C811.9 623.7 809.5 619.5 808.0 615.5C806.5 611.5 805.8 607.4 805.7 603.5C805.5 599.5 806.1 595.5 807.0 591.6C808.0 587.6 809.1 583.6 811.3 579.6C813.5 575.6 817.2 571.3 820.2 567.5C823.1 563.7 825.9 560.1 829.1 556.8C832.4 553.6 836.5 550.7 839.8 548.0C843.1 545.3 845.6 542.9 848.9 540.6C852.2 538.3 855.5 535.6 859.5 534.1ZM862.7 541.6C866.3 540.3 871.0 539.9 874.9 539.8C878.7 539.7 882.1 540.2 885.7 541.1C889.2 542.0 893.3 543.5 896.4 545.4C899.6 547.2 901.8 549.8 904.5 552.1C907.2 554.3 909.7 556.0 912.6 558.7C915.5 561.4 919.1 565.6 922.0 568.1C924.9 570.5 927.2 572.0 930.1 573.4C933.0 574.9 935.7 576.0 939.4 576.9C943.2 577.8 948.2 578.3 952.6 578.8C957.0 579.3 962.0 579.3 966.0 579.7C969.9 580.1 973.8 580.1 976.5 581.1C979.1 582.1 980.7 583.2 981.8 585.7C982.9 588.3 983.7 592.9 983.3 596.5C982.9 600.0 980.4 603.1 979.6 607.1C978.8 611.2 979.1 616.0 978.6 620.6C978.0 625.1 977.3 629.8 976.4 634.2C975.4 638.5 975.2 643.4 972.6 646.6C970.1 649.9 965.4 651.8 961.2 653.8C957.0 655.7 952.1 656.6 947.6 658.2C943.0 659.8 938.3 662.3 933.7 663.5C929.1 664.6 924.4 664.6 919.8 665.0C915.1 665.5 910.5 666.0 905.9 666.1C901.4 666.3 896.9 666.3 892.4 665.9C887.9 665.4 883.0 665.0 879.0 663.7C874.9 662.4 871.6 660.4 868.2 658.2C864.8 655.9 861.9 651.7 858.8 650.2C855.7 648.6 852.4 649.6 849.5 648.7C846.6 647.8 844.3 646.9 841.4 644.7C838.5 642.4 835.1 638.4 832.0 635.3C828.8 632.2 825.2 629.3 822.6 625.9C820.0 622.6 817.8 618.8 816.4 615.2C815.0 611.6 814.3 607.9 814.1 604.3C813.9 600.7 814.4 597.1 815.1 593.5C815.9 589.9 816.8 586.2 818.7 582.5C820.5 578.8 823.7 574.7 826.3 571.2C829.0 567.7 831.5 564.4 834.5 561.5C837.5 558.5 841.3 556.0 844.4 553.6C847.5 551.2 849.9 549.2 853.0 547.2C856.0 545.2 859.0 542.8 862.7 541.6ZM865.9 549.0C869.2 548.0 873.4 547.7 876.8 547.6C880.3 547.6 883.3 548.1 886.5 548.9C889.7 549.8 893.2 551.1 896.0 552.7C898.8 554.4 900.9 556.7 903.3 558.7C905.6 560.7 907.8 562.2 910.4 564.6C913.0 566.9 916.2 570.7 918.8 572.9C921.4 575.0 923.5 576.4 926.0 577.7C928.6 579.0 931.0 580.0 934.3 580.8C937.6 581.6 942.0 582.1 945.9 582.5C949.8 583.0 954.1 583.1 957.6 583.4C961.1 583.8 964.5 583.8 966.8 584.7C969.1 585.6 970.5 586.5 971.5 588.7C972.6 591.0 973.3 595.1 973.0 598.2C972.7 601.4 970.5 604.1 969.9 607.7C969.3 611.3 969.6 615.6 969.2 619.6C968.9 623.7 968.4 627.9 967.6 631.9C966.9 635.8 966.8 640.2 964.7 643.2C962.5 646.2 958.5 648.1 954.8 649.9C951.2 651.7 946.9 652.7 942.8 654.1C938.6 655.6 934.2 657.8 930.0 658.8C925.7 659.7 921.4 659.6 917.2 659.9C913.0 660.2 908.7 660.5 904.6 660.6C900.5 660.6 896.5 660.6 892.5 660.1C888.4 659.7 884.1 659.3 880.5 658.1C876.9 656.9 873.9 655.2 870.9 653.1C867.9 651.1 865.3 647.4 862.5 646.0C859.7 644.6 856.8 645.5 854.3 644.7C851.7 643.8 849.7 643.0 847.1 641.0C844.5 639.1 841.5 635.5 838.7 632.7C835.9 629.9 832.7 627.4 830.4 624.4C828.0 621.4 826.1 618.0 824.8 614.8C823.5 611.6 822.8 608.3 822.6 605.1C822.3 601.9 822.6 598.7 823.2 595.4C823.8 592.1 824.5 588.8 826.0 585.4C827.6 582.0 830.2 578.2 832.5 575.0C834.8 571.8 837.1 568.7 839.8 566.1C842.6 563.4 846.2 561.2 849.1 559.2C851.9 557.1 854.2 555.4 857.0 553.7C859.8 552.0 862.6 550.0 865.9 549.0ZM869.1 556.5C872.1 555.7 875.8 555.5 878.8 555.5C881.8 555.5 884.5 556.0 887.3 556.7C890.1 557.5 893.2 558.7 895.7 560.1C898.1 561.6 899.9 563.6 902.0 565.3C904.1 567.0 906.0 568.4 908.3 570.4C910.5 572.5 913.4 575.8 915.6 577.7C917.9 579.6 919.7 580.7 922.0 581.9C924.2 583.1 926.3 584.0 929.2 584.7C932.0 585.4 935.8 585.9 939.2 586.3C942.5 586.7 946.3 586.8 949.3 587.1C952.3 587.4 955.2 587.5 957.2 588.3C959.2 589.0 960.4 589.8 961.3 591.8C962.2 593.7 962.8 597.3 962.7 600.0C962.5 602.7 960.6 605.1 960.2 608.2C959.7 611.3 960.1 615.1 959.9 618.7C959.7 622.2 959.4 626.0 958.9 629.5C958.4 633.0 958.4 637.0 956.7 639.7C955.0 642.4 951.6 644.3 948.5 646.0C945.4 647.7 941.7 648.7 938.0 650.1C934.2 651.4 930.1 653.2 926.2 654.0C922.3 654.8 918.4 654.6 914.6 654.7C910.8 654.9 907.0 655.1 903.3 655.1C899.6 655.0 896.1 654.9 892.5 654.4C889.0 654.0 885.2 653.5 882.0 652.5C878.9 651.4 876.2 649.9 873.6 648.1C871.0 646.3 868.6 643.1 866.2 641.9C863.8 640.6 861.3 641.3 859.1 640.6C856.9 639.9 855.1 639.2 852.9 637.4C850.6 635.7 848.0 632.6 845.5 630.1C843.0 627.7 840.2 625.4 838.1 622.8C836.1 620.2 834.3 617.3 833.2 614.5C832.0 611.7 831.4 608.8 831.0 605.9C830.7 603.1 830.9 600.3 831.3 597.3C831.7 594.4 832.1 591.4 833.4 588.3C834.6 585.2 836.7 581.7 838.6 578.7C840.6 575.8 842.6 573.0 845.2 570.7C847.7 568.4 851.1 566.5 853.7 564.8C856.4 563.1 858.5 561.7 861.1 560.3C863.6 558.9 866.1 557.3 869.1 556.5ZM872.3 563.9C874.9 563.4 878.2 563.2 880.8 563.4C883.4 563.5 885.7 563.9 888.1 564.6C890.5 565.3 893.2 566.3 895.3 567.5C897.4 568.8 898.9 570.5 900.7 571.9C902.5 573.4 904.1 574.6 906.1 576.3C908.1 578.1 910.5 580.8 912.5 582.5C914.4 584.1 916.0 585.1 917.9 586.1C919.8 587.1 921.6 587.9 924.0 588.6C926.4 589.2 929.6 589.6 932.5 590.0C935.3 590.4 938.4 590.5 940.9 590.8C943.4 591.1 945.8 591.2 947.5 591.8C949.2 592.5 950.2 593.2 951.0 594.8C951.8 596.5 952.4 599.5 952.3 601.8C952.2 604.1 950.8 606.1 950.5 608.8C950.2 611.4 950.7 614.7 950.6 617.8C950.5 620.8 950.5 624.1 950.2 627.2C949.8 630.3 950.1 633.8 948.7 636.2C947.4 638.7 944.7 640.5 942.1 642.1C939.5 643.7 936.4 644.8 933.1 646.0C929.9 647.2 926.0 648.7 922.5 649.3C919.0 649.9 915.4 649.6 912.0 649.6C908.6 649.6 905.2 649.7 902.0 649.5C898.7 649.4 895.7 649.2 892.6 648.7C889.5 648.3 886.2 647.8 883.5 646.9C880.8 645.9 878.6 644.6 876.3 643.1C874.1 641.5 872.0 638.8 869.9 637.7C867.9 636.6 865.8 637.2 863.9 636.5C862.0 635.9 860.5 635.3 858.6 633.8C856.7 632.3 854.4 629.6 852.3 627.6C850.1 625.5 847.7 623.5 845.9 621.3C844.1 619.1 842.6 616.5 841.5 614.1C840.5 611.7 839.9 609.2 839.5 606.8C839.1 604.3 839.2 601.8 839.4 599.2C839.6 596.7 839.8 594.0 840.7 591.2C841.6 588.5 843.1 585.2 844.8 582.5C846.4 579.9 848.2 577.3 850.5 575.3C852.8 573.3 856.0 571.8 858.4 570.4C860.8 569.0 862.8 567.9 865.1 566.9C867.5 565.8 869.7 564.5 872.3 563.9ZM875.5 571.4C877.8 571.0 880.5 571.0 882.8 571.2C885.0 571.4 886.9 571.8 888.9 572.4C890.9 573.0 893.1 573.9 894.9 574.9C896.7 575.9 897.9 577.3 899.4 578.6C900.9 579.8 902.3 580.7 903.9 582.2C905.6 583.6 907.7 585.9 909.3 587.3C911.0 588.6 912.2 589.5 913.8 590.4C915.4 591.2 916.9 591.9 918.9 592.4C920.9 593.0 923.5 593.4 925.7 593.8C928.0 594.1 930.5 594.2 932.5 594.5C934.6 594.8 936.5 594.8 937.9 595.4C939.2 596.0 940.1 596.5 940.7 597.9C941.4 599.2 942.0 601.7 942.0 603.6C942.0 605.5 940.9 607.1 940.8 609.3C940.7 611.5 941.2 614.2 941.3 616.8C941.4 619.4 941.5 622.2 941.4 624.9C941.3 627.5 941.7 630.6 940.8 632.8C939.8 635.0 937.9 636.7 935.8 638.2C933.7 639.8 931.2 640.9 928.3 641.9C925.5 643.0 921.9 644.2 918.8 644.6C915.6 645.0 912.4 644.6 909.4 644.5C906.4 644.4 903.4 644.2 900.7 644.0C897.9 643.7 895.3 643.5 892.7 643.0C890.1 642.6 887.3 642.1 885.1 641.3C882.8 640.4 880.9 639.3 879.0 638.0C877.1 636.7 875.4 634.5 873.7 633.6C872.0 632.6 870.3 633.1 868.7 632.5C867.1 631.9 865.9 631.4 864.3 630.2C862.7 628.9 860.8 626.7 859.0 625.0C857.3 623.2 855.2 621.6 853.7 619.8C852.2 617.9 850.9 615.8 849.9 613.8C849.0 611.8 848.4 609.7 848.0 607.6C847.5 605.5 847.4 603.4 847.5 601.2C847.5 598.9 847.5 596.6 848.0 594.2C848.6 591.7 849.6 588.6 850.9 586.3C852.2 583.9 853.8 581.6 855.9 579.9C857.9 578.2 860.8 577.1 863.1 576.0C865.3 574.9 867.1 574.2 869.2 573.4C871.3 572.7 873.3 571.8 875.5 571.4ZM878.7 578.9C880.6 578.7 882.9 578.8 884.7 579.1C886.6 579.3 888.1 579.6 889.7 580.2C891.3 580.7 893.1 581.5 894.5 582.3C895.9 583.1 896.9 584.2 898.2 585.2C899.4 586.1 900.5 586.9 901.8 588.1C903.1 589.2 904.8 591.0 906.1 592.1C907.5 593.2 908.5 593.9 909.8 594.6C911.0 595.3 912.2 595.8 913.7 596.3C915.3 596.8 917.3 597.2 919.0 597.5C920.8 597.8 922.7 598.0 924.2 598.2C925.7 598.4 927.2 598.5 928.2 599.0C929.3 599.4 929.9 599.8 930.5 600.9C931.1 602.0 931.6 603.8 931.7 605.3C931.8 606.8 931.1 608.1 931.1 609.9C931.2 611.6 931.7 613.8 932.0 615.9C932.2 618.0 932.5 620.3 932.7 622.6C932.8 624.8 933.3 627.3 932.8 629.3C932.3 631.3 931.0 632.9 929.5 634.3C927.9 635.8 925.9 636.9 923.5 637.9C921.1 638.8 917.8 639.6 915.0 639.9C912.2 640.1 909.4 639.5 906.8 639.3C904.2 639.1 901.7 638.8 899.3 638.5C897.0 638.1 894.8 637.8 892.7 637.3C890.6 636.8 888.4 636.4 886.6 635.7C884.7 634.9 883.3 634.0 881.7 633.0C880.2 631.9 878.8 630.2 877.4 629.4C876.0 628.6 874.7 628.9 873.5 628.4C872.3 628.0 871.4 627.5 870.1 626.5C868.8 625.5 867.2 623.8 865.8 622.4C864.4 621.0 862.8 619.7 861.5 618.2C860.3 616.7 859.2 615.1 858.3 613.4C857.5 611.8 856.9 610.1 856.4 608.4C856.0 606.7 855.7 605.0 855.5 603.1C855.4 601.2 855.1 599.2 855.4 597.1C855.6 594.9 856.1 592.1 857.1 590.0C858.0 587.9 859.4 585.9 861.2 584.5C863.0 583.1 865.7 582.3 867.7 581.6C869.7 580.8 871.4 580.5 873.2 580.0C875.1 579.5 876.8 579.0 878.7 578.9ZM881.9 586.3C883.5 586.4 885.3 586.6 886.7 586.9C888.1 587.2 889.3 587.5 890.5 588.0C891.8 588.5 893.1 589.1 894.1 589.7C895.2 590.3 896.0 591.1 896.9 591.8C897.8 592.5 898.6 593.1 899.6 593.9C900.6 594.8 901.9 596.1 903.0 596.9C904.0 597.7 904.8 598.3 905.7 598.8C906.6 599.4 907.5 599.8 908.6 600.2C909.7 600.6 911.1 601.0 912.3 601.2C913.5 601.5 914.8 601.7 915.8 601.9C916.9 602.1 917.9 602.2 918.6 602.5C919.3 602.9 919.8 603.2 920.2 603.9C920.7 604.7 921.2 606.0 921.4 607.1C921.6 608.2 921.2 609.1 921.4 610.4C921.6 611.7 922.2 613.3 922.6 615.0C923.1 616.6 923.6 618.4 923.9 620.2C924.3 622.1 925.0 624.1 924.8 625.8C924.7 627.5 924.1 629.1 923.1 630.5C922.1 631.8 920.7 633.0 918.7 633.8C916.8 634.6 913.7 635.1 911.3 635.1C908.9 635.2 906.4 634.5 904.2 634.2C902.0 633.8 899.9 633.4 898.0 632.9C896.1 632.5 894.4 632.1 892.8 631.6C891.1 631.1 889.5 630.7 888.1 630.0C886.7 629.4 885.6 628.7 884.4 627.9C883.3 627.1 882.1 625.8 881.1 625.2C880.1 624.6 879.2 624.8 878.3 624.4C877.4 624.0 876.8 623.7 875.8 622.9C874.8 622.1 873.6 620.8 872.5 619.8C871.5 618.8 870.3 617.8 869.3 616.7C868.3 615.6 867.4 614.3 866.7 613.1C866.0 611.8 865.4 610.6 864.9 609.2C864.4 607.9 864.0 606.6 863.6 605.0C863.3 603.5 862.8 601.9 862.7 600.0C862.6 598.1 862.6 595.6 863.2 593.8C863.9 592.0 865.0 590.2 866.5 589.1C868.1 588.0 870.6 587.6 872.4 587.2C874.2 586.8 875.7 586.7 877.3 586.6C878.9 586.4 880.4 586.3 881.9 586.3ZM885.2 593.8C886.4 594.1 887.6 594.4 888.7 594.8C889.7 595.1 890.5 595.4 891.3 595.8C892.2 596.2 893.0 596.6 893.8 597.1C894.5 597.5 895.0 598.0 895.6 598.4C896.2 598.9 896.8 599.2 897.5 599.8C898.2 600.3 899.1 601.2 899.8 601.7C900.5 602.2 901.0 602.6 901.6 603.0C902.2 603.4 902.8 603.8 903.5 604.1C904.1 604.4 904.9 604.7 905.6 605.0C906.3 605.2 906.9 605.4 907.5 605.6C908.1 605.8 908.5 605.9 908.9 606.1C909.4 606.3 909.6 606.5 910.0 607.0C910.3 607.4 910.7 608.2 911.0 608.9C911.3 609.6 911.4 610.1 911.7 610.9C912.1 611.8 912.7 612.9 913.3 614.0C913.9 615.2 914.6 616.5 915.2 617.9C915.8 619.3 916.6 620.9 916.9 622.4C917.1 623.8 917.3 625.3 916.8 626.6C916.3 627.8 915.5 629.1 913.9 629.7C912.4 630.4 909.6 630.5 907.6 630.4C905.5 630.3 903.4 629.5 901.6 629.0C899.8 628.5 898.1 627.9 896.7 627.4C895.2 626.9 894.0 626.4 892.8 625.9C891.7 625.4 890.6 624.9 889.6 624.4C888.7 623.9 887.9 623.5 887.1 622.9C886.4 622.3 885.5 621.5 884.8 621.1C884.2 620.7 883.7 620.6 883.1 620.3C882.6 620.0 882.2 619.8 881.5 619.3C880.9 618.7 880.0 617.9 879.3 617.2C878.6 616.5 877.8 615.9 877.1 615.1C876.4 614.4 875.7 613.6 875.1 612.7C874.5 611.9 873.9 611.0 873.3 610.1C872.8 609.1 872.2 608.1 871.7 606.9C871.1 605.7 870.4 604.5 870.0 602.9C869.7 601.3 869.1 599.1 869.4 597.6C869.7 596.0 870.6 594.5 871.9 593.8C873.2 593.0 875.5 592.9 877.0 592.8C878.6 592.7 880.0 593.0 881.4 593.1C882.7 593.3 883.9 593.5 885.2 593.8Z" stroke="#40e0d2" stroke-width="3.200"/>
<path d="M884 607 L912 624 M905 628 L 918 630" stroke="#40e0d2" stroke-width="3"/>
</g>
<g fill="none" stroke-linecap="butt">
<path d="M853.500 577 L854 616" stroke="#1010c0" stroke-width="2.600" stroke-dasharray="5 8"/>
<path d="M853.500 583 L854 620" stroke="#9fd8f8" stroke-width="2" stroke-dasharray="2 11"/>
<path d="M857 644 L884 621" stroke="#38f048" stroke-width="3"/><path d="M864 631l8 8M873 624l8 8" stroke="#38f048" stroke-width="2.500"/>
<path d="M845 628l6-4M858 617l5-3M868 620l5-4M882 628l6-4M868 642l4-4M858 652c4-1 6-4 5-8M875 604c-1-3 0-5 2-6M898 620l4-3" stroke="#c81010" stroke-width="2.800"/>
<path d="M871 602c3 6 8 11 14 14" stroke="#f0b030" stroke-width="3"/><path d="M880 603c4 6 10 10 18 13" stroke="#f8e8e8" stroke-width="2.600"/><path d="M885 614l12 4" stroke="#e8e040" stroke-width="2.400"/>
<path d="M856 623c3 4 6 6 9 7" stroke="#f6d0d8" stroke-width="3"/><path d="M835 642c5 6 12 9 20 10" stroke="#f6d0d8" stroke-width="2.600"/><path d="M831 646c2 3 4 5 7 7" stroke="#f0a060" stroke-width="3"/>
</g>
<g><path d="M923 615v17a11 6.500 0 0 0 22 0V613z" fill="#b8922c" opacity=".92"/><path d="M929 620v18M935 621v18M941 619v18" stroke="#d8b040" stroke-width="1.500" opacity=".6"/><ellipse cx="934" cy="614.500" rx="11" ry="6.500" fill="#a8883a" stroke="#4a4020" stroke-width=".9" transform="rotate(-12 934 614.500)"/></g>
<path d="M859.500 393 L881.500 389 L945 611 L923 618Z" fill="#787878" opacity=".6"/>
<path d="M859.500 393 L881.500 389 L912 496 L886.500 496Z" fill="#757575"/>
<path d="M735.500 232 L751 290 L859.500 392 L 881.500 388 L 915 268 C 920 258 921 250 913 232 Z" fill="#6e866a"/>
<path d="M735.500 232 L751 290 C 757 312 790 318 830 308 C 870 298 905 280 915 268 C 920 258 921 250 913 232 Z" fill="#769170"/>
<path d="M735.500 232 L751 290 L859.500 392 L 866 392 L 790 315 L 760 232Z" fill="#66805f" opacity=".55"/>
<path d="M751 290 C 757 312 790 318 830 308 C 870 298 905 280 915 268 C 924 256 921 246 913 238 M751 290 C 748 270 770 250 806 233" fill="none" stroke="#2e3a28" stroke-width=".9"/>
<ellipse cx="870.500" cy="390" rx="11" ry="6.300" fill="#728a68" stroke="#2a3324" stroke-width=".9" transform="rotate(-10 870.500 390)"/>
<g fill="none" stroke-width="1.600"><path d="M1238.500 770 L1223.500 700" stroke="#b8b0e0" stroke-width="2"/><path d="M1219.500 702l1-16.500 6.500 15z" fill="#7684d6" stroke="none"/>
<path d="M1238.500 770 L1271 751" stroke="#e6dfbe"/><path d="M1271 751 L1303 732" stroke="#4aa04a"/><path d="M1300.500 728.500l17-6-12.500 13z" fill="#46b050" stroke="none"/>
<path d="M1238.500 770 L1269 788" stroke="#f0dada"/><path d="M1269 788 L1290 800" stroke="#c03848"/><path d="M1289.500 795.500l12 11-16.500-3.500z" fill="#c23448" stroke="none"/></g>
<text x="1223" y="683.500" font-family="Liberation Sans,sans-serif" font-size="13" fill="#3434b0">ZM</text>
<text x="1298.500" y="718" font-family="Liberation Sans,sans-serif" font-size="13.500" fill="#5a9a5a">YM</text>
<text x="1284" y="820.500" font-family="Liberation Sans,sans-serif" font-size="13.500" fill="#8a3038">XM</text>
</svg>
<!--/VIEW-->
<!-- left navigator strip -->
<div class="a" style="left:0;top:233px;width:55px;height:772px;background:#fff;overflow:hidden">
<div class="a" style="left:0;top:42px;width:55px;height:22px;background:#ebebeb"></div><div class="a" style="left:0;top:736px;width:55px;height:36px;background:#fff;z-index:2"></div><div class="a" style="left:0;top:740px;width:55px;height:21px;background:#ececec;z-index:3"></div>
<div class="a" style="left:0;top:88px;width:55px;height:1px;background:#ececec"></div>
<div class="a" style="left:0;top:89px;width:55px;height:24px;background:#f4f4f4"></div>
<div class="a" style="left:0;top:112px;width:55px;height:1px;background:#ececec"></div>
<div class="a" style="left:0;top:136px;width:55px;height:1px;background:#ececec"></div>
<div class="a" style="left:0;top:137px;width:55px;height:24px;background:#f4f4f4"></div>
<div class="a" style="left:0;top:160px;width:55px;height:1px;background:#ececec"></div>
<div class="a" style="left:0;top:184px;width:55px;height:1px;background:#ececec"></div>
<div class="a" style="left:0;top:185px;width:55px;height:24px;background:#f4f4f4"></div>
<div class="a" style="left:0;top:208px;width:55px;height:1px;background:#ececec"></div>
<div class="a" style="left:0;top:232px;width:55px;height:1px;background:#ececec"></div>
<div class="a" style="left:0;top:233px;width:55px;height:24px;background:#f4f4f4"></div>
<div class="a" style="left:0;top:256px;width:55px;height:1px;background:#ececec"></div>
<div class="a" style="left:0;top:280px;width:55px;height:1px;background:#ececec"></div>
<div class="a" style="left:0;top:281px;width:55px;height:24px;background:#f4f4f4"></div>
<div class="a" style="left:0;top:304px;width:55px;height:1px;background:#ececec"></div>
<div class="a" style="left:0;top:328px;width:55px;height:1px;background:#ececec"></div>
<div class="a" style="left:0;top:329px;width:55px;height:24px;background:#f4f4f4"></div>
<div class="a" style="left:0;top:352px;width:55px;height:1px;background:#ececec"></div>
<div class="a" style="left:0;top:376px;width:55px;height:1px;background:#ececec"></div>
<div class="a" style="left:0;top:377px;width:55px;height:24px;background:#f4f4f4"></div>
<div class="a" style="left:0;top:400px;width:55px;height:1px;background:#ececec"></div>
<div class="a" style="left:0;top:424px;width:55px;height:1px;background:#ececec"></div>
<div class="a" style="left:0;top:425px;width:55px;height:24px;background:#f4f4f4"></div>
<div class="a" style="left:0;top:448px;width:55px;height:1px;background:#ececec"></div>
<div class="a" style="left:0;top:472px;width:55px;height:1px;background:#ececec"></div>
<div class="a" style="left:0;top:473px;width:55px;height:24px;background:#f4f4f4"></div>
<div class="a" style="left:0;top:496px;width:55px;height:1px;background:#ececec"></div>
<div class="a" style="left:0;top:520px;width:55px;height:1px;background:#ececec"></div>
<div class="a" style="left:0;top:521px;width:55px;height:24px;background:#f4f4f4"></div>
<div class="a" style="left:0;top:544px;width:55px;height:1px;background:#ececec"></div>
<div class="a" style="left:0;top:568px;width:55px;height:1px;background:#ececec"></div>
<div class="a" style="left:0;top:569px;width:55px;height:24px;background:#f4f4f4"></div>
<div class="a" style="left:0;top:592px;width:55px;height:1px;background:#ececec"></div>
<div class="a" style="left:0;top:616px;width:55px;height:1px;background:#ececec"></div>
<div class="a" style="left:0;top:617px;width:55px;height:24px;background:#f4f4f4"></div>
<div class="a" style="left:0;top:640px;width:55px;height:1px;background:#ececec"></div>
<div class="a" style="left:0;top:664px;width:55px;height:1px;background:#ececec"></div>
<div class="a" style="left:0;top:665px;width:55px;height:24px;background:#f4f4f4"></div>
<div class="a" style="left:0;top:688px;width:55px;height:1px;background:#ececec"></div>
<div class="a" style="left:0;top:712px;width:55px;height:1px;background:#ececec"></div>
<div class="a" style="left:0;top:713px;width:55px;height:24px;background:#f4f4f4"></div>
<div class="a" style="left:0;top:736px;width:55px;height:1px;background:#ececec"></div>
<div class="a" style="left:0;top:760px;width:55px;height:1px;background:#ececec"></div>
<div class="a" style="left:0;top:761px;width:55px;height:24px;background:#f4f4f4"></div>
<div class="a" style="left:0;top:784px;width:55px;height:1px;background:#ececec"></div>
</div>
<div class="a " style="left:-7px;top:210.5px;font-size:15px;color:#111">航器</div>
<div class="a" style="left:15px;top:238px;width:32px;height:33px;background:#8cc5d6"></div>
<svg class="a" style="left:0;top:238px" width="56" height="34" fill="none"><path d="M0 5l6 12-6 3z" fill="#a8a8a8"/><rect x="-4" y="18" width="12" height="12" fill="#fff" stroke="#222" stroke-width="1.300"/><path d="M0 21v6h4M0 24h4" stroke="#222"/>
<path d="M24 12l6-8h5l8 14-5 4-5-3-5 3z" fill="#b8b8b8" stroke="#888"/><rect x="20" y="9" width="14" height="12" rx="4" fill="#f28a1e"/><rect x="31" y="15" width="13" height="14" fill="#fff" stroke="#222" stroke-width="1.300"/><path d="M35 18v8h5M35 22h5" stroke="#222"/><rect x="34" y="17" width="2.500" height="2.500" fill="#222"/><rect x="39" y="21" width="2.500" height="2.500" fill="#222"/><rect x="39" y="25" width="2.500" height="2.500" fill="#222"/>
<path d="M52 8v6M52 17v6" stroke="#333"/></svg>
<div class="a" style="left:-6px;top:303px;font-size:14px;color:#111">OMETRY</div>
<svg class="a" style="left:0;top:327px" width="5" height="14" fill="none" stroke="#222" stroke-width="1.200"><path d="M-2 1.500h4v11h-4M-2 7h4"/></svg><div class="a" style="left:7px;top:326.5px;font-size:15px;color:#111">未用项</div>
<svg class="a" style="left:0;top:351px" width="5" height="14" fill="none" stroke="#222" stroke-width="1.200"><path d="M-3 2l5 5-5 5M-1 10.500h3"/></svg><div class="a" style="left:7px;top:351px;font-size:14.5px;color:#111;letter-spacing:-.3px">MCS</div>
<svg class="a" style="left:0;top:372px" width="24" height="20"><path d="M0 10h4" stroke="#999" stroke-dasharray="1 1"/><path d="M6 8l6-4 8 3v8l-6 4-8-3z" fill="#9a9a9a" stroke="#444"/><path d="M6 8l8 3 6-4M14 11v8" stroke="#444" fill="none"/><circle cx="13" cy="7" r="2.500" fill="#fff" stroke="#444"/></svg>
<div class="a " style="left:25px;top:374.2px;font-size:15.5px;color:#111">WOI</div>
<svg class="a" style="left:10px;top:396px" width="46" height="20" fill="none"><path d="M3 0v10h8" stroke="#999" stroke-dasharray="1 1"/><path d="M23 2v9M23 14v2" stroke="#e8b458" stroke-width="2"/><path d="M32 2v7h4V2h4v7h4V2" stroke="#7a1aa0" stroke-width="1.500"/><path d="M30 14l8-3 8 3-8 4z" fill="#8aa8d8"/></svg>
<svg class="a" style="left:0;top:420px" width="40" height="20" fill="none"><path d="M0 10h6" stroke="#999" stroke-dasharray="1 1"/><path d="M13 2v9M13 14v2" stroke="#e8b458" stroke-width="2"/><path d="M22 5l4-3h12v13l-4 3H22z" fill="#8a8a78" stroke="#333"/><path d="M26 16c0-6 3-9 9-9" stroke="#fff" stroke-width="2"/></svg>
<div class="a " style="left:41px;top:422.2px;font-size:15.5px;color:#111">VA</div>
<svg class="a" style="left:0;top:447px" width="5" height="14" fill="none" stroke="#222" stroke-width="1.200"><path d="M-3 2l5 5-5 5M-1 10.500h3"/></svg><div class="a" style="left:7px;top:447px;font-size:14.5px;color:#111;letter-spacing:-.5px">MCS_1</div>
<!-- status bar -->
<div class="a" style="left:-6.500px;top:1010.500px;font-size:13.500px;color:#111;font-weight:bold">以定位刀具，或使用“播放”启动重播</div>
<div class="a" style="left:806px;top:1010.500px;font-size:14px;letter-spacing:.77px;color:#111;font-weight:bold">进给 = 250.000, x = 12.98, y = -61.22, z = 69.54</div>
<svg class="a" style="left:1707px;top:1008px" width="18" height="20" fill="none" stroke="#333" stroke-width="1.300"><path d="M3 14c2-2 2-4 2-6a4 4 0 0 1 8 0c0 2 0 4 2 6z"/><path d="M7.500 16.500a1.500 1.500 0 0 0 3 0M9 2v2"/></svg>
<!-- taskbar icons -->
<div class="a" style="left:526px;top:1030px;width:61px;height:50px;background:#465172"></div>
<div class="tk" style="left:97px;width:51px"></div>
<div class="tk" style="left:159px;width:50px"></div>
<div class="tk" style="left:345px;width:51px"></div>
<div class="tk" style="left:469px;width:51px"></div>
<div class="tk" style="left:526px;width:61px"></div>
<div class="tk" style="left:593px;width:48px"></div>
<div class="tk" style="left:652px;width:54px"></div>
<div class="tk" style="left:641px;width:5px;background:#6f86a8"></div>
<svg class="a" style="left:0;top:1026px" width="720" height="54" fill="none">
<!-- shield partial -->
<path d="M-4 18h12v16c0 4-5 7-10 9z" fill="#d4d8dc"/><path d="M0 24l3 8h-6z" stroke="#8fa8b8" stroke-width="1.300"/>
<!-- explorer -->
<path d="M46 20h10l3 3h15v5H46z" fill="#e8a82a"/><rect x="46" y="22" width="28" height="17" rx="1.500" fill="#fbd25a"/><path d="M52 39v-8h16v8h-4v-4h-8v4z" fill="#4a9ae0"/><path d="M46 36h28v3H46z" fill="#e0b040"/>
<!-- outlook -->
<rect x="116" y="16" width="20" height="20" rx="2" fill="#28a8ea"/><path d="M116 16h10v10h-10z" fill="#0a5ea8"/><path d="M126 16h10v10h-10z" fill="#2ab0f0"/><path d="M126 26h10v10h-10z" fill="#50c8f8"/><path d="M116 26h10v10h-10z" fill="#1490df"/><rect x="107" y="21" width="15" height="15" rx="1.500" fill="#0f6cbd"/><circle cx="114.500" cy="28.500" r="3.700" stroke="#fff" stroke-width="1.800"/><path d="M129 30l9 15h-18z" fill="#f2b060" stroke="#c88838" stroke-width=".8"/><path d="M129 35v5M129 42v1.500" stroke="#222" stroke-width="1.600"/>
<!-- excel -->
<rect x="176" y="16" width="22" height="26" rx="2" fill="#21a366"/><path d="M187 16h11v9h-11z" fill="#33c481"/><path d="M176 25h11v8h-11z" fill="#107c41"/><path d="M187 25h11v8h-11z" fill="#21a366"/><path d="M176 33h22v9h-22z" fill="#185c37"/><path d="M187 33h11v9h-11z" fill="#107c41"/><rect x="169" y="21" width="15" height="15" rx="1.500" fill="#107c41"/><path d="M173 24.500l7 8M180 24.500l-7 8" stroke="#fff" stroke-width="1.800"/>
<!-- word -->
<rect x="238" y="16" width="22" height="26" rx="2" fill="#2b7cd3"/><path d="M238 16h22v7h-22z" fill="#41a5ee"/><path d="M238 23h22v6h-22z" fill="#2b7cd3"/><path d="M238 29h22v6h-22z" fill="#185abd"/><path d="M238 35h22v7h-22z" fill="#103f91"/><rect x="231" y="21" width="15" height="15" rx="1.500" fill="#185abd"/><path d="M234 25l2 7.500 2.500-7.500 2.500 7.500 2-7.500" stroke="#fff" stroke-width="1.500"/>
<!-- ppt -->
<circle cx="308" cy="29" r="13.500" fill="#d35230"/><path d="M308 15.500a13.500 13.500 0 0 1 13.500 13.500H308z" fill="#ff8f6b"/><path d="M308 29h13.500a13.500 13.500 0 0 1-13.500 13.500z" fill="#ed6c47"/><rect x="293" y="21" width="15" height="15" rx="1.500" fill="#c43e1c"/><path d="M298 33v-8.500h3.500a2.600 2.600 0 0 1 0 5.200H298" stroke="#fff" stroke-width="1.700"/>
<!-- edge -->
<circle cx="369" cy="29" r="14" fill="#2a8fdc"/><path d="M355.500 27c1-8 7-12 13.500-12 8 0 14 6 14 12.500 0 4-3 6.500-7 6.500-3 0-4-1.500-3-3 1-2 0-6-5-6-5 0-9 4-8.500 10-3-2-4.500-5-4-8z" fill="#48d07a"/><path d="M369 25c-6 0-10 5-8 11 2 5 8 8 14 6-4 0-8-3-8-7 0-3 2-5 5-5 2 0 3 1 3 2 0-4-2-7-6-7z" fill="#145aa8"/><path d="M355.500 27c1-8 7-12 13.500-12 6 0 11 3 13 8-3-3-7-4-11-3-7 1-11 7-10 15-4-2-6-5-5.500-8z" fill="#3ac0e8" opacity=".55"/>
<!-- vscode -->
<path d="M441 15l5 2.500v23l-5 2.500-16-14.500z" fill="#2a9fe8"/><path d="M441 15l-17 15.500-5-4 2-2 4 3L441 15z" fill="#1f8ad0"/><path d="M419 31.500l2 2 4-3 16 12.500-17-15z" fill="#1f8ad0"/><path d="M441 22v14l-9-7z" fill="#1b2548"/><path d="M441 15l5 2.500v23l-5 2.500z" fill="#3ab0f5"/>
<!-- teams -->
<circle cx="495" cy="20" r="4.500" fill="#7b83eb"/><circle cx="504" cy="22" r="3.500" fill="#5059c9"/><rect x="486" y="26" width="15" height="17" rx="3" fill="#7b83eb"/><rect x="499" y="27" width="9" height="13" rx="3" fill="#5059c9"/><rect x="479" y="22" width="14" height="14" rx="1.500" fill="#4b53bc"/><path d="M482.500 25.500h7M486 25.500v8" stroke="#fff" stroke-width="1.700"/><circle cx="503" cy="39" r="5" fill="#f8d848" stroke="#f0f0e0" stroke-width="1"/><path d="M503 36.500v2.500h2" stroke="#b89820" stroke-width="1"/>
<!-- NX -->
<path d="M543 19v25h24" stroke="#28a89a" stroke-width="2.500"/><rect x="545" y="15" width="25" height="25" fill="#9b1020"/><text x="546.500" y="34" font-family="Liberation Sans,sans-serif" font-weight="bold" font-size="15.500" fill="#fff" letter-spacing="-1" textLength="22" lengthAdjust="spacingAndGlyphs">NX</text>
<!-- wechat -->
<ellipse cx="613" cy="26" rx="10.500" ry="9" fill="#35d45a"/><path d="M606 33l-1 5 5-3z" fill="#35d45a"/><circle cx="609.500" cy="23.500" r="1.300" fill="#158a30"/><circle cx="616.500" cy="23.500" r="1.300" fill="#158a30"/><ellipse cx="624" cy="32" rx="8.500" ry="7.500" fill="#e8e8e8"/><path d="M629 38l2 4-5-2z" fill="#e8e8e8"/><circle cx="621" cy="30" r="1.100" fill="#888"/><circle cx="627" cy="30" r="1.100" fill="#888"/>
<!-- OBS -->
<circle cx="679" cy="29" r="13" fill="#1a1a22" stroke="#d8d8d8" stroke-width="2"/><path d="M679 18c-4 3-4 8 0 11M679 29c5-2 10 1 10 6M679 29c-4 3-4 8-9 8" stroke="#d8d8d8" stroke-width="2"/><circle cx="679" cy="29" r="9" stroke="#d8d8d8" stroke-width="1" opacity=".4"/>
</svg>
<!-- tray -->
<svg class="a" style="left:1170px;top:1031.500px" width="460" height="48" fill="none">
<path d="M9 30l8-8 8 8" stroke="#e8e8e8" stroke-width="1.600"/>
<ellipse cx="43" cy="22" rx="7" ry="6" fill="#35d45a"/><ellipse cx="51" cy="27" rx="6" ry="5.200" fill="#e8e8e8"/><circle cx="41" cy="21" r="1" fill="#158a30"/><circle cx="46" cy="21" r="1" fill="#158a30"/>
<path d="M68 31a5 5 0 0 1 1-9.500 7 7 0 0 1 13-1 5.500 5.500 0 0 1 2 10.500z" fill="#1a8ae0"/><path d="M68 31a5 5 0 0 1 1-9.500c4 0 8 3 13 9.500z" fill="#1170c8"/>
<rect x="96" y="14" width="20" height="20" rx="4" fill="#f2f4f8"/><circle cx="106" cy="21" r="3" stroke="#e06aa8" stroke-width="1.600"/><circle cx="102" cy="27" r="3" stroke="#3a8ae8" stroke-width="1.600"/><circle cx="110" cy="27" r="3" stroke="#3ab8e8" stroke-width="1.600"/>
<path d="M128 22l8-6 9 2v10l-8 6-9-3z" fill="#e8e8e8" stroke="#222" stroke-width="1.200"/><path d="M128 22l9 3 8-7M137 25v9" stroke="#222" stroke-width="1.200"/>
<rect x="161" y="16" width="12" height="12" rx="1" fill="#28a8ea"/><rect x="156" y="19" width="9" height="9" rx="1" fill="#0f6cbd"/><circle cx="160.500" cy="23.500" r="2.200" stroke="#fff" stroke-width="1.200"/><path d="M170 23l6 10h-12z" fill="#f2b060"/><path d="M170 27v3" stroke="#222" stroke-width="1.200"/>
<circle cx="196" cy="24" r="9" fill="#2a2a2a" stroke="#c8c8c8" stroke-width="1.600"/><path d="M196 24v9M196 24l-7-5M196 24l7-5" stroke="#c8c8c8" stroke-width="2.200"/>
<circle cx="228" cy="21" r="5.500" stroke="#f08a28" stroke-width="3"/><path d="M224 26l-5 7" stroke="#f08a28" stroke-width="3.200" stroke-linecap="round"/>
<circle cx="252" cy="18" r="3" fill="#7b83eb"/><circle cx="259" cy="19" r="2.500" fill="#5059c9"/><rect x="247" y="21" width="10" height="11" rx="2" fill="#7b83eb"/><rect x="256" y="22" width="6" height="8" rx="2" fill="#5059c9"/><rect x="242" y="18" width="10" height="10" rx="1" fill="#4b53bc"/><path d="M244.500 21h5M247 21v5.500" stroke="#fff" stroke-width="1.300"/><circle cx="258" cy="31" r="3.500" fill="#f8d848"/>
<rect x="276" y="14" width="20" height="20" rx="4" fill="#2a7af0"/><path d="M280 20c5 0 6 2 8 5l5-5-2 8c-1 3-5 4-8 2l3-3c-3 0-5-3-6-7z" fill="#fff"/>
<rect x="312" y="13" width="8" height="15" rx="4" fill="#f0f0f0"/><path d="M309 25a7 7 0 0 0 14 0M316 32v4M312 36h8" stroke="#f0f0f0" stroke-width="1.400"/>
<rect x="339" y="18" width="17" height="10" rx="1" stroke="#f0f0f0" stroke-width="1.400"/><rect x="341" y="20" width="13" height="6" fill="#f0f0f0"/><path d="M336 20v5M333 22.500h6M357 21v4" stroke="#f0f0f0" stroke-width="1.400"/>
<path d="M366 31c0-8 6-14 14-14" stroke="#f0f0f0" stroke-width="1.400"/><path d="M370 31c0-6 4-10 10-10" stroke="#f0f0f0" stroke-width="1.400"/><path d="M374 31c0-4 2-6 6-6" stroke="#f0f0f0" stroke-width="1.400"/><circle cx="379" cy="31" r="1.300" fill="#f0f0f0"/>
<path d="M394 21h4l5-4v15l-5-4h-4z" stroke="#f0f0f0" stroke-width="1.300"/><path d="M406 21c1.500 2 1.500 5 0 7" stroke="#f0f0f0" stroke-width="1.200"/><path d="M409 18c3 4 3 9 0 13" stroke="#909090" stroke-width="1.200"/><path d="M412 15.500c4 5.500 4 13 0 18.500" stroke="#606060" stroke-width="1.200"/>
</svg>
<div class="a" style="left:1595px;top:1044px;font-size:20px;color:#fff;font-weight:500">中</div>
<div class="a" style="left:1632px;top:1045px;width:19px;height:19px;background:#fff"></div><div class="a" style="left:1634px;top:1047px;font-size:15px;color:#111;font-weight:bold">拼</div>
<div class="a" style="left:1691px;top:1035px;font-size:15.500px;color:#fff">17:42</div>
<div class="a" style="left:1669px;top:1059px;font-size:15.500px;color:#fff">2021/12</div>
<!-- ===== dialog ===== -->
<div id="dialog" class="a" style="left:55px;top:15px;width:380px;height:1006px;background:#f0f0f0;border:1px solid #d0d0d0;box-shadow:0 0 7px rgba(0,0,0,.33)"></div>
<div id="dlgtitle" class="a" style="left:55px;top:15px;width:380px;height:27px;background:#086486"></div>
<!-- dialog content -->
<svg class="a" style="left:63px;top:20px" width="16" height="16"><path d="M15.32 6.36L15.32 9.64L12.88 10.06L12.91 9.99L14.33 12.02L12.02 14.33L9.99 12.91L10.06 12.88L9.64 15.32L6.36 15.32L5.94 12.88L6.01 12.91L3.98 14.33L1.67 12.02L3.09 9.99L3.12 10.06L0.68 9.64L0.68 6.36L3.12 5.94L3.09 6.01L1.67 3.98L3.98 1.67L6.01 3.09L5.94 3.12L6.36 0.68L9.64 0.68L10.06 3.12L9.99 3.09L12.02 1.67L14.33 3.98L12.91 6.01L12.88 5.94Z" fill="#fff"/><circle cx="8" cy="8" r="2.400" fill="#086486"/></svg>
<div class="a " style="left:88px;top:19.0px;font-size:18px;color:#fff;letter-spacing:-1.1px">刀轨可视化（原有）</div>
<div class="a " style="left:387px;top:19.5px;font-size:17px;color:#fff;font-weight:bold">?</div>
<svg class="a" style="left:411px;top:21px" width="15" height="15" stroke="#fff" stroke-width="2.200"><path d="M2 2l11 11M13 2L2 13"/></svg>
<div class="a" style="left:68px;top:52px;width:356px;height:146px;background:#fff;border:1px solid #7b7b7b"></div>
<div class="a" style="left:69px;top:53px;width:332px;height:21px;background:#8fc4d6;border:1px dotted #2a4a55"></div>
<div class="a li" style="left:70px;top:55.8px;font-size:15.8px;color:#111">GOTO/3.765,-77.992,71.707</div>
<div class="a li" style="left:70px;top:75.8px;font-size:15.8px;color:#111">GOTO/3.765,-77.987,71.348</div>
<div class="a li" style="left:70px;top:95.8px;font-size:15.8px;color:#111">GOTO/3.866,-77.946,71.006</div>
<div class="a li" style="left:70px;top:115.8px;font-size:15.8px;color:#111">GOTO/4.050,-77.876,70.707</div>
<div class="a li" style="left:70px;top:135.8px;font-size:15.8px;color:#111">GOTO/4.295,-77.785,70.459</div>
<div class="a li" style="left:70px;top:155.8px;font-size:15.8px;color:#111">GOTO/4.578,-77.682,70.263</div>
<div class="a" style="left:401px;top:53px;width:22px;height:123px;background:#f0f0f0"></div>
<div class="a" style="left:402px;top:74px;width:19px;height:53px;background:#c9c9c9"></div>
<svg class="a" style="left:405px;top:58px" width="14" height="10" fill="none" stroke="#333" stroke-width="1.600"><path d="M2 8l5-5 5 5"/></svg>
<svg class="a" style="left:405px;top:159px" width="14" height="10" fill="none" stroke="#333" stroke-width="1.600"><path d="M2 2l5 5 5-5"/></svg>
<div class="a" style="left:69px;top:176px;width:354px;height:21px;background:#f0f0f0"></div>
<div class="a" style="left:91px;top:177px;width:206px;height:19px;background:#c9c9c9"></div>
<svg class="a" style="left:75px;top:179px" width="10" height="14" fill="none" stroke="#333" stroke-width="1.600"><path d="M8 2L3 7l5 5"/></svg>
<svg class="a" style="left:385px;top:179px" width="10" height="14" fill="none" stroke="#333" stroke-width="1.600"><path d="M2 2l5 5-5 5"/></svg>
<div class="a " style="left:74px;top:205.5px;font-size:15px;color:#222">1</div>
<div class="a" style="left:80px;top:237px;width:335px;height:4px;background:#b0b0b0"></div>
<div class="a" style="left:75px;top:226px;width:13px;height:24px;background:#12648a"></div>
<div class="a " style="left:71px;top:255.5px;font-size:15px;color:#222">1</div>
<div class="a " style="left:397px;top:255.5px;font-size:15px;color:#222">199</div>
<div class="a " style="left:66px;top:281.5px;font-size:15.5px;color:#111">进给率 0.000000</div>
<div class="a" style="left:67px;top:336px;width:357px;height:498px;background:#fdfdfd;border:1px solid #d2d2d2"></div>
<div class="a" style="left:127px;top:306px;width:69px;height:30px;background:#f0f0f0;border:1px solid #cdcdcd;border-bottom:0"></div>
<div class="a" style="left:66px;top:303px;width:62px;height:35px;background:linear-gradient(#f0f0f0 0,#f4f4f4 60%,#fdfdfd 100%);border:1px solid #d2d2d2;border-bottom:0"></div>
<div class="a " style="left:82px;top:312.5px;font-size:15px;color:#b4b4b4">重播</div>
<div class="a " style="left:135px;top:313.5px;font-size:15px;color:#bdbdbd">3D 动态</div>
<div class="a " style="left:73px;top:345.5px;font-size:15px;color:#111">显示选项</div>
<div class="a " style="left:73px;top:373.5px;font-size:15px;color:#b8b8b8">刀具</div>
<div class="a" style="left:356px;top:367px;width:61px;height:27px;background:#f2f2f2;border:1px solid #bdbdbd"></div>
<div class="a" style="left:393px;top:368px;width:23px;height:25px;background:#fbfbfb"></div>
<div class="a " style="left:361px;top:373.5px;font-size:15px;color:#7a7a7a">刀具</div>
<div class="arr" style="left:401px;top:378px;border-top-color:#9a9a9a"></div>
<div class="cb" style="left:73px;top:400px"></div><div class="a " style="left:95px;top:401.5px;font-size:15px;color:#bdbdbd">2D 除料</div>
<div class="cb" style="left:73px;top:426px"></div><div class="a " style="left:95px;top:427.5px;font-size:15px;color:#bdbdbd">显示上一个 IPW</div>
<div class="a" style="left:73px;top:449px;width:344px;height:1px;background:#dcdcdc"></div>
<div class="a " style="left:73px;top:457.5px;font-size:15px;color:#111">运动显示</div>
<div class="a " style="left:73px;top:485.5px;font-size:15px;color:#b8b8b8">刀轨</div>
<div class="a" style="left:251px;top:479px;width:166px;height:27px;background:#f2f2f2;border:1px solid #bdbdbd"></div>
<div class="a" style="left:393px;top:480px;width:23px;height:25px;background:#fbfbfb"></div>
<div class="a " style="left:256px;top:485.5px;font-size:15px;color:#7a7a7a">全部</div>
<div class="arr" style="left:401px;top:490px;border-top-color:#9a9a9a"></div>
<div class="a " style="left:73px;top:515.5px;font-size:15px;color:#b8b8b8">刀具轨迹</div>
<div class="a" style="left:326px;top:509px;width:91px;height:27px;background:#f2f2f2;border:1px solid #bdbdbd"></div>
<div class="a" style="left:393px;top:510px;width:23px;height:25px;background:#fbfbfb"></div>
<div class="a " style="left:331px;top:515.5px;font-size:15px;color:#7a7a7a">工具提示</div>
<div class="arr" style="left:401px;top:520px;border-top-color:#9a9a9a"></div>
<div class="a " style="left:73px;top:544.5px;font-size:15px;color:#b8b8b8">运动数</div>
<div class="a" style="left:327px;top:539px;width:90px;height:26px;background:#f2f2f2;border:1px solid #c4c4c4"></div>
<div class="a " style="left:393px;top:544.0px;font-size:16px;color:#7a7a7a;letter-spacing:.5px">10</div>
<div class="cb" style="left:73px;top:570px"></div><div class="a " style="left:95px;top:571.5px;font-size:15px;color:#bdbdbd">在每一层暂停</div>
<div class="cb" style="left:73px;top:596px"></div><div class="a " style="left:95px;top:597.5px;font-size:15px;color:#bdbdbd">显示刀具接触</div>
<div class="a" style="left:73px;top:619px;width:344px;height:1px;background:#dcdcdc"></div>
<div class="a" style="left:73px;top:623px;width:344px;height:32px;background:#fdfdfd;border:1px solid #c2c2c2"></div>
<div class="a " style="left:192px;top:631.5px;font-size:15px;color:#b4b4b4">过切和碰撞设置</div>
<div class="a " style="left:66px;top:840.5px;font-size:15px;color:#111">动画速度</div>
<div class="a " style="left:333px;top:865.5px;font-size:15px;color:#222">8</div>
<div class="a" style="left:75px;top:898px;width:340px;height:4px;background:#b0b0b0"></div>
<div class="a" style="left:329px;top:887px;width:13px;height:24px;background:#12648a"></div>
<div class="a " style="left:71px;top:916.5px;font-size:15px;color:#222">1</div>
<div class="a " style="left:407px;top:916.5px;font-size:15px;color:#222">10</div>
<div class="pb" style="left:127px"><svg width="31" height="31" style="position:absolute;left:-1px;top:-1px" fill="#ab9c9c" stroke="#a39696" stroke-width="1.200"><path d="M6.500 8v15" fill="none" stroke-width="1.600"/><path d="M8.500 15.500l7.500-7.500v15zM17.500 15.500l7.500-7.500v15z" stroke="none"/></svg></div>
<div class="pb" style="left:161px"><svg width="31" height="31" style="position:absolute;left:-1px;top:-1px" fill="#ab9c9c" stroke="#a39696" stroke-width="1.200"><path d="M10.500 8v15" fill="none" stroke-width="1.600"/><path d="M12.500 15.500l8-7.500v15z" stroke="none"/></svg></div>
<div class="pb" style="left:195px"><svg width="31" height="31" style="position:absolute;left:-1px;top:-1px" fill="#ab9c9c" stroke="#a39696" stroke-width="1.200"><path d="M11.500 15.500l8-7.500v15z" stroke="none"/></svg></div>
<div class="pb" style="left:229px"><svg width="31" height="31" style="position:absolute;left:-1px;top:-1px" fill="#ab9c9c" stroke="#a39696" stroke-width="1.200"><path d="M20 15.500l-8-7.500v15z" stroke="none"/></svg></div>
<div class="pb" style="left:263px"><svg width="31" height="31" style="position:absolute;left:-1px;top:-1px" fill="#ab9c9c" stroke="#a39696" stroke-width="1.200"><path d="M21 8v15" fill="none" stroke-width="1.600"/><path d="M18.500 15.500l-8-7.500v15z" stroke="none"/></svg></div>
<div class="pb" style="left:297px"><svg width="31" height="31" style="position:absolute;left:-1px;top:-1px" fill="#ab9c9c" stroke="#a39696" stroke-width="1.200"><path d="M25 8v15" fill="none" stroke-width="1.600"/><path d="M23 15.500l-7.500-7.500v15zM14 15.500l-7.500-7.500v15z" stroke="none"/></svg></div>
<div class="pb" style="left:331px;background:#add8e6;border-color:#add8e6"></div>
<div class="a" style="left:341px;top:948px;width:11px;height:11px;background:#7a0000"></div>
<div class="a" style="left:294px;top:984px;width:60px;height:27px;border:1px solid #cfcfcf;background:#efefef"></div><div class="a " style="left:309px;top:989.5px;font-size:15px;color:#b4b4b4">确定</div>
<div class="a" style="left:359px;top:984px;width:60px;height:27px;border:1px solid #cfcfcf;background:#efefef"></div><div class="a " style="left:374px;top:989.5px;font-size:15px;color:#b4b4b4">取消</div>
<div class="a" style="left:350px;top:966px;width:46px;height:35px;background:#fff;border:1px solid #c8c8c8;box-shadow:2px 2px 3px rgba(0,0,0,.3)"></div><div class="a " style="left:358px;top:976.5px;font-size:15px;color:#111">停止</div>
<svg class="a" style="left:348px;top:946px" width="16" height="24"><path d="M1.500 1.500v17l4-4 3 7 3-1.300-3-6.700h5.500z" fill="#fff" stroke="#000" stroke-width="1.100"/></svg>
</body></html>
